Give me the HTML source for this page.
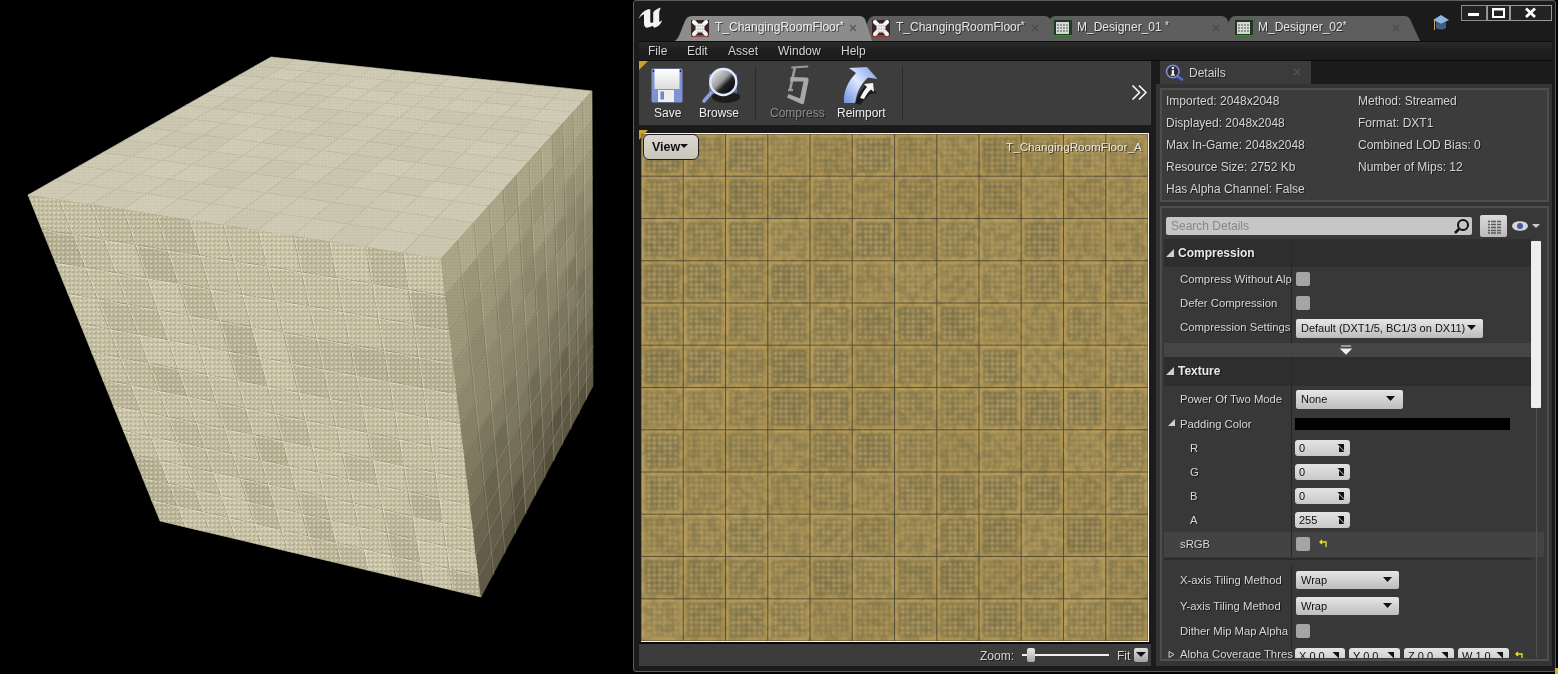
<!DOCTYPE html>
<html><head><meta charset="utf-8">
<style>
*{margin:0;padding:0;box-sizing:border-box}
html,body{width:1558px;height:674px;overflow:hidden;background:#000}
body{position:relative;font-family:"Liberation Sans",sans-serif;font-size:12px;color:#d4d4d4}
.a{position:absolute}
.t{position:absolute;white-space:nowrap;line-height:1;will-change:transform;text-shadow:1px 1px 0 rgba(0,0,0,.55)}
.win{left:633px;top:0;width:923px;height:672px;background:#1b1b1b;border:1px solid #5c5c5c;border-radius:3px}
.menubar{left:639px;top:41px;width:913px;height:20px;background:linear-gradient(#2a2a2a,#1d1d1d 60%,#1d1d1d);border-top:1px solid #0c0c0c;border-bottom:1px solid #0c0c0c}
.toolbar{left:639px;top:61px;width:512px;height:64px;background:#3d3d3d;border-right:1px solid #464646}
.sep{top:66px;width:1px;height:54px;background:#2b2b2b}
.zoombar{left:639px;top:644px;width:512px;height:22px;background:#3c3c3c}
.tex{left:641px;top:134px;width:507px;height:507px;overflow:hidden}
.dtab{left:1160px;top:61px;width:151px;height:23px;background:#3b3b3b}
.panel{left:1156px;top:84px;width:396px;height:582px;background:#343434}
.box{border:2px solid #4e4e4e;background:#3c3c3c}
.hdr{background:#2e2e2e}
.row{background:#383838}
.cb{width:14px;height:14px;background:#a5a5a5;border-radius:2px}
.dd{height:19px;font-size:11px;background:linear-gradient(#e6e6e6,#bdbdbd);border-radius:2px;color:#111;text-shadow:none}
.fld{height:16px;background:linear-gradient(#e4e4e4,#c8c8c8);border-radius:3px;color:#111}
.lbl{color:#d6d6d6;font-size:11.3px}
</style></head><body>
<svg width="633" height="674" style="position:absolute;left:0;top:0"><defs><pattern id="cdots" width="4.4" height="4.4" patternUnits="userSpaceOnUse"><circle cx="2.6" cy="2.9" r="1.5" fill="#7a6c48" opacity=".42"/><circle cx="2" cy="2.1" r="1.15" fill="#fbf8ea" opacity=".55"/></pattern><pattern id="cdots2" width="3" height="3" patternUnits="userSpaceOnUse"><circle cx="1.5" cy="1.5" r="0.8" fill="#6e6a50" opacity=".18"/></pattern><linearGradient id="rg" x1="0" y1="0" x2="0" y2="1"><stop offset="0" stop-color="#000" stop-opacity="0"/><stop offset="1" stop-color="#000" stop-opacity=".12"/></linearGradient></defs><g stroke-width="0.6"><polygon points="28.0,195.0 58.9,199.8 84.7,184.6 54.4,180.0" fill="#d0cbb4" stroke="#d0cbb4"/><polygon points="58.9,199.8 90.4,204.7 115.5,189.2 84.7,184.6" fill="#d0cbb4" stroke="#d0cbb4"/><polygon points="90.4,204.7 122.5,209.6 146.9,193.8 115.5,189.2" fill="#cec9b2" stroke="#cec9b2"/><polygon points="122.5,209.6 155.2,214.7 178.9,198.6 146.9,193.8" fill="#d2cdb6" stroke="#d2cdb6"/><polygon points="155.2,214.7 188.5,219.9 211.5,203.5 178.9,198.6" fill="#d0cbb4" stroke="#d0cbb4"/><polygon points="188.5,219.9 222.5,225.1 244.7,208.4 211.5,203.5" fill="#d0cbb4" stroke="#d0cbb4"/><polygon points="222.5,225.1 257.1,230.5 278.5,213.5 244.7,208.4" fill="#ccc7b0" stroke="#ccc7b0"/><polygon points="257.1,230.5 292.4,236.0 313.0,218.6 278.5,213.5" fill="#d0cbb4" stroke="#d0cbb4"/><polygon points="292.4,236.0 328.5,241.6 348.2,223.9 313.0,218.6" fill="#d0cbb4" stroke="#d0cbb4"/><polygon points="328.5,241.6 365.2,247.3 384.0,229.2 348.2,223.9" fill="#ccc7b0" stroke="#ccc7b0"/><polygon points="365.2,247.3 402.7,253.1 420.6,234.7 384.0,229.2" fill="#d0cbb4" stroke="#d0cbb4"/><polygon points="402.7,253.1 441.0,259.0 457.8,240.3 420.6,234.7" fill="#ccc7b0" stroke="#ccc7b0"/><polygon points="54.4,180.0 84.7,184.6 109.0,170.1 79.3,165.9" fill="#d0cbb4" stroke="#d0cbb4"/><polygon points="84.7,184.6 115.5,189.2 139.2,174.5 109.0,170.1" fill="#d0cbb4" stroke="#d0cbb4"/><polygon points="115.5,189.2 146.9,193.8 170.0,178.9 139.2,174.5" fill="#d0cbb4" stroke="#d0cbb4"/><polygon points="146.9,193.8 178.9,198.6 201.3,183.4 170.0,178.9" fill="#cec9b2" stroke="#cec9b2"/><polygon points="178.9,198.6 211.5,203.5 233.2,188.0 201.3,183.4" fill="#cec9b2" stroke="#cec9b2"/><polygon points="211.5,203.5 244.7,208.4 265.6,192.7 233.2,188.0" fill="#d0cbb4" stroke="#d0cbb4"/><polygon points="244.7,208.4 278.5,213.5 298.7,197.5 265.6,192.7" fill="#d0cbb4" stroke="#d0cbb4"/><polygon points="278.5,213.5 313.0,218.6 332.4,202.3 298.7,197.5" fill="#d0cbb4" stroke="#d0cbb4"/><polygon points="313.0,218.6 348.2,223.9 366.7,207.3 332.4,202.3" fill="#ccc7b0" stroke="#ccc7b0"/><polygon points="348.2,223.9 384.0,229.2 401.7,212.3 366.7,207.3" fill="#cec9b2" stroke="#cec9b2"/><polygon points="384.0,229.2 420.6,234.7 437.3,217.4 401.7,212.3" fill="#d0cbb4" stroke="#d0cbb4"/><polygon points="420.6,234.7 457.8,240.3 473.7,222.7 437.3,217.4" fill="#ccc7b0" stroke="#ccc7b0"/><polygon points="79.3,165.9 109.0,170.1 132.1,156.5 103.0,152.4" fill="#d0cbb4" stroke="#d0cbb4"/><polygon points="109.0,170.1 139.2,174.5 161.7,160.6 132.1,156.5" fill="#d0cbb4" stroke="#d0cbb4"/><polygon points="139.2,174.5 170.0,178.9 191.8,164.8 161.7,160.6" fill="#d2cdb6" stroke="#d2cdb6"/><polygon points="170.0,178.9 201.3,183.4 222.5,169.1 191.8,164.8" fill="#d2cdb6" stroke="#d2cdb6"/><polygon points="201.3,183.4 233.2,188.0 253.7,173.4 222.5,169.1" fill="#ccc7b0" stroke="#ccc7b0"/><polygon points="233.2,188.0 265.6,192.7 285.5,177.8 253.7,173.4" fill="#d0cbb4" stroke="#d0cbb4"/><polygon points="265.6,192.7 298.7,197.5 317.8,182.3 285.5,177.8" fill="#ccc7b0" stroke="#ccc7b0"/><polygon points="298.7,197.5 332.4,202.3 350.7,186.9 317.8,182.3" fill="#ccc7b0" stroke="#ccc7b0"/><polygon points="332.4,202.3 366.7,207.3 384.2,191.5 350.7,186.9" fill="#cec9b2" stroke="#cec9b2"/><polygon points="366.7,207.3 401.7,212.3 418.4,196.3 384.2,191.5" fill="#d0cbb4" stroke="#d0cbb4"/><polygon points="401.7,212.3 437.3,217.4 453.1,201.1 418.4,196.3" fill="#d0cbb4" stroke="#d0cbb4"/><polygon points="437.3,217.4 473.7,222.7 488.6,206.1 453.1,201.1" fill="#d0cbb4" stroke="#d0cbb4"/><polygon points="103.0,152.4 132.1,156.5 154.0,143.5 125.4,139.7" fill="#ccc7b0" stroke="#ccc7b0"/><polygon points="132.1,156.5 161.7,160.6 183.0,147.4 154.0,143.5" fill="#d0cbb4" stroke="#d0cbb4"/><polygon points="161.7,160.6 191.8,164.8 212.6,151.4 183.0,147.4" fill="#d0cbb4" stroke="#d0cbb4"/><polygon points="191.8,164.8 222.5,169.1 242.6,155.4 212.6,151.4" fill="#cec9b2" stroke="#cec9b2"/><polygon points="222.5,169.1 253.7,173.4 273.1,159.5 242.6,155.4" fill="#d0cbb4" stroke="#d0cbb4"/><polygon points="253.7,173.4 285.5,177.8 304.2,163.7 273.1,159.5" fill="#ccc7b0" stroke="#ccc7b0"/><polygon points="285.5,177.8 317.8,182.3 335.8,168.0 304.2,163.7" fill="#d0cbb4" stroke="#d0cbb4"/><polygon points="317.8,182.3 350.7,186.9 368.0,172.3 335.8,168.0" fill="#ccc7b0" stroke="#ccc7b0"/><polygon points="350.7,186.9 384.2,191.5 400.8,176.7 368.0,172.3" fill="#d0cbb4" stroke="#d0cbb4"/><polygon points="384.2,191.5 418.4,196.3 434.1,181.2 400.8,176.7" fill="#ccc7b0" stroke="#ccc7b0"/><polygon points="418.4,196.3 453.1,201.1 468.1,185.8 434.1,181.2" fill="#d2cdb6" stroke="#d2cdb6"/><polygon points="453.1,201.1 488.6,206.1 502.7,190.4 468.1,185.8" fill="#d0cbb4" stroke="#d0cbb4"/><polygon points="125.4,139.7 154.0,143.5 174.8,131.2 146.8,127.6" fill="#d0cbb4" stroke="#d0cbb4"/><polygon points="154.0,143.5 183.0,147.4 203.3,134.9 174.8,131.2" fill="#ccc7b0" stroke="#ccc7b0"/><polygon points="183.0,147.4 212.6,151.4 232.2,138.7 203.3,134.9" fill="#ccc7b0" stroke="#ccc7b0"/><polygon points="212.6,151.4 242.6,155.4 261.7,142.5 232.2,138.7" fill="#d2cdb6" stroke="#d2cdb6"/><polygon points="242.6,155.4 273.1,159.5 291.6,146.4 261.7,142.5" fill="#d0cbb4" stroke="#d0cbb4"/><polygon points="273.1,159.5 304.2,163.7 322.0,150.4 291.6,146.4" fill="#d0cbb4" stroke="#d0cbb4"/><polygon points="304.2,163.7 335.8,168.0 353.0,154.4 322.0,150.4" fill="#d0cbb4" stroke="#d0cbb4"/><polygon points="335.8,168.0 368.0,172.3 384.4,158.5 353.0,154.4" fill="#ccc7b0" stroke="#ccc7b0"/><polygon points="368.0,172.3 400.8,176.7 416.5,162.6 384.4,158.5" fill="#d2cdb6" stroke="#d2cdb6"/><polygon points="400.8,176.7 434.1,181.2 449.1,166.9 416.5,162.6" fill="#d0cbb4" stroke="#d0cbb4"/><polygon points="434.1,181.2 468.1,185.8 482.2,171.2 449.1,166.9" fill="#ccc7b0" stroke="#ccc7b0"/><polygon points="468.1,185.8 502.7,190.4 516.0,175.6 482.2,171.2" fill="#d0cbb4" stroke="#d0cbb4"/><polygon points="146.8,127.6 174.8,131.2 194.6,119.5 167.1,116.0" fill="#ccc7b0" stroke="#ccc7b0"/><polygon points="174.8,131.2 203.3,134.9 222.5,123.0 194.6,119.5" fill="#d0cbb4" stroke="#d0cbb4"/><polygon points="203.3,134.9 232.2,138.7 250.9,126.6 222.5,123.0" fill="#cec9b2" stroke="#cec9b2"/><polygon points="232.2,138.7 261.7,142.5 279.8,130.2 250.9,126.6" fill="#d2cdb6" stroke="#d2cdb6"/><polygon points="261.7,142.5 291.6,146.4 309.1,133.9 279.8,130.2" fill="#ccc7b0" stroke="#ccc7b0"/><polygon points="291.6,146.4 322.0,150.4 338.9,137.7 309.1,133.9" fill="#cec9b2" stroke="#cec9b2"/><polygon points="322.0,150.4 353.0,154.4 369.2,141.5 338.9,137.7" fill="#d0cbb4" stroke="#d0cbb4"/><polygon points="353.0,154.4 384.4,158.5 400.0,145.4 369.2,141.5" fill="#cec9b2" stroke="#cec9b2"/><polygon points="384.4,158.5 416.5,162.6 431.3,149.3 400.0,145.4" fill="#ccc7b0" stroke="#ccc7b0"/><polygon points="416.5,162.6 449.1,166.9 463.2,153.3 431.3,149.3" fill="#cec9b2" stroke="#cec9b2"/><polygon points="449.1,166.9 482.2,171.2 495.6,157.4 463.2,153.3" fill="#d0cbb4" stroke="#d0cbb4"/><polygon points="482.2,171.2 516.0,175.6 528.6,161.6 495.6,157.4" fill="#d0cbb4" stroke="#d0cbb4"/><polygon points="167.1,116.0 194.6,119.5 213.4,108.3 186.4,105.0" fill="#d0cbb4" stroke="#d0cbb4"/><polygon points="194.6,119.5 222.5,123.0 240.9,111.7 213.4,108.3" fill="#d0cbb4" stroke="#d0cbb4"/><polygon points="222.5,123.0 250.9,126.6 268.7,115.1 240.9,111.7" fill="#d2cdb6" stroke="#d2cdb6"/><polygon points="250.9,126.6 279.8,130.2 297.0,118.5 268.7,115.1" fill="#d0cbb4" stroke="#d0cbb4"/><polygon points="279.8,130.2 309.1,133.9 325.7,122.0 297.0,118.5" fill="#d0cbb4" stroke="#d0cbb4"/><polygon points="309.1,133.9 338.9,137.7 354.9,125.6 325.7,122.0" fill="#ccc7b0" stroke="#ccc7b0"/><polygon points="338.9,137.7 369.2,141.5 384.6,129.2 354.9,125.6" fill="#d0cbb4" stroke="#d0cbb4"/><polygon points="369.2,141.5 400.0,145.4 414.8,132.9 384.6,129.2" fill="#ccc7b0" stroke="#ccc7b0"/><polygon points="400.0,145.4 431.3,149.3 445.4,136.7 414.8,132.9" fill="#cec9b2" stroke="#cec9b2"/><polygon points="431.3,149.3 463.2,153.3 476.6,140.5 445.4,136.7" fill="#d0cbb4" stroke="#d0cbb4"/><polygon points="463.2,153.3 495.6,157.4 508.3,144.4 476.6,140.5" fill="#d2cdb6" stroke="#d2cdb6"/><polygon points="495.6,157.4 528.6,161.6 540.5,148.3 508.3,144.4" fill="#cec9b2" stroke="#cec9b2"/><polygon points="186.4,105.0 213.4,108.3 231.4,97.7 204.9,94.5" fill="#d0cbb4" stroke="#d0cbb4"/><polygon points="213.4,108.3 240.9,111.7 258.3,100.9 231.4,97.7" fill="#ccc7b0" stroke="#ccc7b0"/><polygon points="240.9,111.7 268.7,115.1 285.7,104.1 258.3,100.9" fill="#d0cbb4" stroke="#d0cbb4"/><polygon points="268.7,115.1 297.0,118.5 313.4,107.4 285.7,104.1" fill="#d0cbb4" stroke="#d0cbb4"/><polygon points="297.0,118.5 325.7,122.0 341.6,110.7 313.4,107.4" fill="#ccc7b0" stroke="#ccc7b0"/><polygon points="325.7,122.0 354.9,125.6 370.2,114.1 341.6,110.7" fill="#cec9b2" stroke="#cec9b2"/><polygon points="354.9,125.6 384.6,129.2 399.3,117.6 370.2,114.1" fill="#d0cbb4" stroke="#d0cbb4"/><polygon points="384.6,129.2 414.8,132.9 428.8,121.1 399.3,117.6" fill="#d0cbb4" stroke="#d0cbb4"/><polygon points="414.8,132.9 445.4,136.7 458.8,124.6 428.8,121.1" fill="#d0cbb4" stroke="#d0cbb4"/><polygon points="445.4,136.7 476.6,140.5 489.3,128.3 458.8,124.6" fill="#cec9b2" stroke="#cec9b2"/><polygon points="476.6,140.5 508.3,144.4 520.3,131.9 489.3,128.3" fill="#cec9b2" stroke="#cec9b2"/><polygon points="508.3,144.4 540.5,148.3 551.8,135.7 520.3,131.9" fill="#d0cbb4" stroke="#d0cbb4"/><polygon points="204.9,94.5 231.4,97.7 248.6,87.5 222.5,84.5" fill="#d2cdb6" stroke="#d2cdb6"/><polygon points="231.4,97.7 258.3,100.9 275.0,90.6 248.6,87.5" fill="#d0cbb4" stroke="#d0cbb4"/><polygon points="258.3,100.9 285.7,104.1 301.8,93.6 275.0,90.6" fill="#ccc7b0" stroke="#ccc7b0"/><polygon points="285.7,104.1 313.4,107.4 329.1,96.8 301.8,93.6" fill="#ccc7b0" stroke="#ccc7b0"/><polygon points="313.4,107.4 341.6,110.7 356.7,100.0 329.1,96.8" fill="#d0cbb4" stroke="#d0cbb4"/><polygon points="341.6,110.7 370.2,114.1 384.8,103.2 356.7,100.0" fill="#d0cbb4" stroke="#d0cbb4"/><polygon points="370.2,114.1 399.3,117.6 413.3,106.5 384.8,103.2" fill="#d2cdb6" stroke="#d2cdb6"/><polygon points="399.3,117.6 428.8,121.1 442.2,109.8 413.3,106.5" fill="#d0cbb4" stroke="#d0cbb4"/><polygon points="428.8,121.1 458.8,124.6 471.6,113.2 442.2,109.8" fill="#ccc7b0" stroke="#ccc7b0"/><polygon points="458.8,124.6 489.3,128.3 501.5,116.6 471.6,113.2" fill="#cec9b2" stroke="#cec9b2"/><polygon points="489.3,128.3 520.3,131.9 531.8,120.1 501.5,116.6" fill="#ccc7b0" stroke="#ccc7b0"/><polygon points="520.3,131.9 551.8,135.7 562.6,123.7 531.8,120.1" fill="#cec9b2" stroke="#cec9b2"/><polygon points="222.5,84.5 248.6,87.5 265.0,77.8 239.4,74.9" fill="#d0cbb4" stroke="#d0cbb4"/><polygon points="248.6,87.5 275.0,90.6 291.0,80.7 265.0,77.8" fill="#d0cbb4" stroke="#d0cbb4"/><polygon points="275.0,90.6 301.8,93.6 317.3,83.7 291.0,80.7" fill="#d0cbb4" stroke="#d0cbb4"/><polygon points="301.8,93.6 329.1,96.8 344.0,86.6 317.3,83.7" fill="#cec9b2" stroke="#cec9b2"/><polygon points="329.1,96.8 356.7,100.0 371.1,89.7 344.0,86.6" fill="#d2cdb6" stroke="#d2cdb6"/><polygon points="356.7,100.0 384.8,103.2 398.7,92.8 371.1,89.7" fill="#d2cdb6" stroke="#d2cdb6"/><polygon points="384.8,103.2 413.3,106.5 426.6,95.9 398.7,92.8" fill="#d0cbb4" stroke="#d0cbb4"/><polygon points="413.3,106.5 442.2,109.8 455.0,99.1 426.6,95.9" fill="#d0cbb4" stroke="#d0cbb4"/><polygon points="442.2,109.8 471.6,113.2 483.8,102.3 455.0,99.1" fill="#d2cdb6" stroke="#d2cdb6"/><polygon points="471.6,113.2 501.5,116.6 513.0,105.6 483.8,102.3" fill="#d2cdb6" stroke="#d2cdb6"/><polygon points="501.5,116.6 531.8,120.1 542.7,108.9 513.0,105.6" fill="#d0cbb4" stroke="#d0cbb4"/><polygon points="531.8,120.1 562.6,123.7 572.9,112.3 542.7,108.9" fill="#d2cdb6" stroke="#d2cdb6"/><polygon points="239.4,74.9 265.0,77.8 280.7,68.5 255.5,65.8" fill="#ccc7b0" stroke="#ccc7b0"/><polygon points="265.0,77.8 291.0,80.7 306.2,71.3 280.7,68.5" fill="#d2cdb6" stroke="#d2cdb6"/><polygon points="291.0,80.7 317.3,83.7 332.1,74.1 306.2,71.3" fill="#cec9b2" stroke="#cec9b2"/><polygon points="317.3,83.7 344.0,86.6 358.3,77.0 332.1,74.1" fill="#d0cbb4" stroke="#d0cbb4"/><polygon points="344.0,86.6 371.1,89.7 384.9,79.9 358.3,77.0" fill="#d2cdb6" stroke="#d2cdb6"/><polygon points="371.1,89.7 398.7,92.8 411.9,82.8 384.9,79.9" fill="#cec9b2" stroke="#cec9b2"/><polygon points="398.7,92.8 426.6,95.9 439.3,85.8 411.9,82.8" fill="#d2cdb6" stroke="#d2cdb6"/><polygon points="426.6,95.9 455.0,99.1 467.2,88.8 439.3,85.8" fill="#d0cbb4" stroke="#d0cbb4"/><polygon points="455.0,99.1 483.8,102.3 495.4,91.9 467.2,88.8" fill="#d0cbb4" stroke="#d0cbb4"/><polygon points="483.8,102.3 513.0,105.6 524.0,95.0 495.4,91.9" fill="#cec9b2" stroke="#cec9b2"/><polygon points="513.0,105.6 542.7,108.9 553.1,98.2 524.0,95.0" fill="#d0cbb4" stroke="#d0cbb4"/><polygon points="542.7,108.9 572.9,112.3 582.7,101.4 553.1,98.2" fill="#d0cbb4" stroke="#d0cbb4"/><polygon points="255.5,65.8 280.7,68.5 295.7,59.6 271.0,57.0" fill="#ccc7b0" stroke="#ccc7b0"/><polygon points="280.7,68.5 306.2,71.3 320.8,62.3 295.7,59.6" fill="#d0cbb4" stroke="#d0cbb4"/><polygon points="306.2,71.3 332.1,74.1 346.2,65.0 320.8,62.3" fill="#cec9b2" stroke="#cec9b2"/><polygon points="332.1,74.1 358.3,77.0 372.0,67.7 346.2,65.0" fill="#d0cbb4" stroke="#d0cbb4"/><polygon points="358.3,77.0 384.9,79.9 398.1,70.5 372.0,67.7" fill="#d0cbb4" stroke="#d0cbb4"/><polygon points="384.9,79.9 411.9,82.8 424.6,73.3 398.1,70.5" fill="#d0cbb4" stroke="#d0cbb4"/><polygon points="411.9,82.8 439.3,85.8 451.5,76.1 424.6,73.3" fill="#d0cbb4" stroke="#d0cbb4"/><polygon points="439.3,85.8 467.2,88.8 478.8,79.0 451.5,76.1" fill="#d2cdb6" stroke="#d2cdb6"/><polygon points="467.2,88.8 495.4,91.9 506.5,81.9 478.8,79.0" fill="#d0cbb4" stroke="#d0cbb4"/><polygon points="495.4,91.9 524.0,95.0 534.6,84.9 506.5,81.9" fill="#cec9b2" stroke="#cec9b2"/><polygon points="524.0,95.0 553.1,98.2 563.1,87.9 534.6,84.9" fill="#cec9b2" stroke="#cec9b2"/><polygon points="553.1,98.2 582.7,101.4 592.0,91.0 563.1,87.9" fill="#cec9b2" stroke="#cec9b2"/></g><g stroke="rgba(150,145,120,.07)" stroke-width="0.7"><line x1="58.9" y1="199.8" x2="295.7" y2="59.6"/><line x1="90.4" y1="204.7" x2="320.8" y2="62.3"/><line x1="122.5" y1="209.6" x2="346.2" y2="65.0"/><line x1="155.2" y1="214.7" x2="372.0" y2="67.7"/><line x1="188.5" y1="219.9" x2="398.1" y2="70.5"/><line x1="222.5" y1="225.1" x2="424.6" y2="73.3"/><line x1="257.1" y1="230.5" x2="451.5" y2="76.1"/><line x1="292.4" y1="236.0" x2="478.8" y2="79.0"/><line x1="328.5" y1="241.6" x2="506.5" y2="81.9"/><line x1="365.2" y1="247.3" x2="534.6" y2="84.9"/><line x1="402.7" y1="253.1" x2="563.1" y2="87.9"/><line x1="54.4" y1="180.0" x2="457.8" y2="240.3"/><line x1="79.3" y1="165.9" x2="473.7" y2="222.7"/><line x1="103.0" y1="152.4" x2="488.6" y2="206.1"/><line x1="125.4" y1="139.7" x2="502.7" y2="190.4"/><line x1="146.8" y1="127.6" x2="516.0" y2="175.6"/><line x1="167.1" y1="116.0" x2="528.6" y2="161.6"/><line x1="186.4" y1="105.0" x2="540.5" y2="148.3"/><line x1="204.9" y1="94.5" x2="551.8" y2="135.7"/><line x1="222.5" y1="84.5" x2="562.6" y2="123.7"/><line x1="239.4" y1="74.9" x2="572.9" y2="112.3"/><line x1="255.5" y1="65.8" x2="582.7" y2="101.4"/></g><g stroke-width="0.6"><polygon points="28.0,195.0 59.1,199.8 72.4,234.4 41.9,229.4" fill="#c7c2a5" stroke="#c7c2a5"/><polygon points="59.1,199.8 90.8,204.7 103.5,239.5 72.4,234.4" fill="#c7c2a5" stroke="#c7c2a5"/><polygon points="90.8,204.7 123.1,209.7 135.0,244.7 103.5,239.5" fill="#c2bda0" stroke="#c2bda0"/><polygon points="123.1,209.7 155.9,214.8 167.1,250.0 135.0,244.7" fill="#c2bda0" stroke="#c2bda0"/><polygon points="155.9,214.8 189.3,220.0 199.8,255.3 167.1,250.0" fill="#bdb89b" stroke="#bdb89b"/><polygon points="189.3,220.0 223.3,225.3 233.0,260.8 199.8,255.3" fill="#cac5a8" stroke="#cac5a8"/><polygon points="223.3,225.3 257.9,230.6 266.8,266.3 233.0,260.8" fill="#c7c2a5" stroke="#c7c2a5"/><polygon points="257.9,230.6 293.2,236.1 301.2,271.9 266.8,266.3" fill="#cdc8ab" stroke="#cdc8ab"/><polygon points="293.2,236.1 329.1,241.7 336.3,277.7 301.2,271.9" fill="#c2bda0" stroke="#c2bda0"/><polygon points="329.1,241.7 365.7,247.3 372.0,283.5 336.3,277.7" fill="#cdc8ab" stroke="#cdc8ab"/><polygon points="365.7,247.3 403.0,253.1 408.3,289.5 372.0,283.5" fill="#bdb89b" stroke="#bdb89b"/><polygon points="403.0,253.1 441.0,259.0 445.3,295.6 408.3,289.5" fill="#cac5a8" stroke="#cac5a8"/><polygon points="41.9,229.4 72.4,234.4 85.1,267.4 55.2,262.2" fill="#b7b295" stroke="#b7b295"/><polygon points="72.4,234.4 103.5,239.5 115.5,272.6 85.1,267.4" fill="#c2bda0" stroke="#c2bda0"/><polygon points="103.5,239.5 135.0,244.7 146.4,277.9 115.5,272.6" fill="#cac5a8" stroke="#cac5a8"/><polygon points="135.0,244.7 167.1,250.0 177.8,283.4 146.4,277.9" fill="#b7b295" stroke="#b7b295"/><polygon points="167.1,250.0 199.8,255.3 209.7,288.9 177.8,283.4" fill="#c2bda0" stroke="#c2bda0"/><polygon points="199.8,255.3 233.0,260.8 242.2,294.5 209.7,288.9" fill="#c7c2a5" stroke="#c7c2a5"/><polygon points="233.0,260.8 266.8,266.3 275.2,300.2 242.2,294.5" fill="#c7c2a5" stroke="#c7c2a5"/><polygon points="266.8,266.3 301.2,271.9 308.8,306.0 275.2,300.2" fill="#c7c2a5" stroke="#c7c2a5"/><polygon points="301.2,271.9 336.3,277.7 343.1,311.8 308.8,306.0" fill="#c7c2a5" stroke="#c7c2a5"/><polygon points="336.3,277.7 372.0,283.5 377.9,317.8 343.1,311.8" fill="#c7c2a5" stroke="#c7c2a5"/><polygon points="372.0,283.5 408.3,289.5 413.3,324.0 377.9,317.8" fill="#c7c2a5" stroke="#c7c2a5"/><polygon points="408.3,289.5 445.3,295.6 449.4,330.2 413.3,324.0" fill="#b7b295" stroke="#b7b295"/><polygon points="55.2,262.2 85.1,267.4 97.2,298.8 67.9,293.5" fill="#c7c2a5" stroke="#c7c2a5"/><polygon points="85.1,267.4 115.5,272.6 126.9,304.2 97.2,298.8" fill="#c7c2a5" stroke="#c7c2a5"/><polygon points="115.5,272.6 146.4,277.9 157.2,309.6 126.9,304.2" fill="#c2bda0" stroke="#c2bda0"/><polygon points="146.4,277.9 177.8,283.4 187.9,315.2 157.2,309.6" fill="#cdc8ab" stroke="#cdc8ab"/><polygon points="177.8,283.4 209.7,288.9 219.2,320.8 187.9,315.2" fill="#bdb89b" stroke="#bdb89b"/><polygon points="209.7,288.9 242.2,294.5 250.9,326.5 219.2,320.8" fill="#c7c2a5" stroke="#c7c2a5"/><polygon points="242.2,294.5 275.2,300.2 283.2,332.4 250.9,326.5" fill="#cac5a8" stroke="#cac5a8"/><polygon points="275.2,300.2 308.8,306.0 316.1,338.3 283.2,332.4" fill="#cac5a8" stroke="#cac5a8"/><polygon points="308.8,306.0 343.1,311.8 349.5,344.3 316.1,338.3" fill="#c7c2a5" stroke="#c7c2a5"/><polygon points="343.1,311.8 377.9,317.8 383.5,350.4 349.5,344.3" fill="#c7c2a5" stroke="#c7c2a5"/><polygon points="377.9,317.8 413.3,324.0 418.1,356.7 383.5,350.4" fill="#c2bda0" stroke="#c2bda0"/><polygon points="413.3,324.0 449.4,330.2 453.3,363.0 418.1,356.7" fill="#bdb89b" stroke="#bdb89b"/><polygon points="67.9,293.5 97.2,298.8 108.7,328.8 80.0,323.4" fill="#cac5a8" stroke="#cac5a8"/><polygon points="97.2,298.8 126.9,304.2 137.8,334.3 108.7,328.8" fill="#bdb89b" stroke="#bdb89b"/><polygon points="126.9,304.2 157.2,309.6 167.5,339.8 137.8,334.3" fill="#bdb89b" stroke="#bdb89b"/><polygon points="157.2,309.6 187.9,315.2 197.6,345.5 167.5,339.8" fill="#cac5a8" stroke="#cac5a8"/><polygon points="187.9,315.2 219.2,320.8 228.2,351.2 197.6,345.5" fill="#c7c2a5" stroke="#c7c2a5"/><polygon points="219.2,320.8 250.9,326.5 259.2,357.1 228.2,351.2" fill="#b7b295" stroke="#b7b295"/><polygon points="250.9,326.5 283.2,332.4 290.9,363.0 259.2,357.1" fill="#cdc8ab" stroke="#cdc8ab"/><polygon points="283.2,332.4 316.1,338.3 323.0,369.0 290.9,363.0" fill="#bdb89b" stroke="#bdb89b"/><polygon points="316.1,338.3 349.5,344.3 355.6,375.2 323.0,369.0" fill="#bdb89b" stroke="#bdb89b"/><polygon points="349.5,344.3 383.5,350.4 388.9,381.4 355.6,375.2" fill="#b7b295" stroke="#b7b295"/><polygon points="383.5,350.4 418.1,356.7 422.6,387.8 388.9,381.4" fill="#b7b295" stroke="#b7b295"/><polygon points="418.1,356.7 453.3,363.0 457.0,394.2 422.6,387.8" fill="#b7b295" stroke="#b7b295"/><polygon points="80.0,323.4 108.7,328.8 119.7,357.4 91.5,351.9" fill="#c7c2a5" stroke="#c7c2a5"/><polygon points="108.7,328.8 137.8,334.3 148.3,363.0 119.7,357.4" fill="#c2bda0" stroke="#c2bda0"/><polygon points="137.8,334.3 167.5,339.8 177.3,368.7 148.3,363.0" fill="#cdc8ab" stroke="#cdc8ab"/><polygon points="167.5,339.8 197.6,345.5 206.8,374.4 177.3,368.7" fill="#cdc8ab" stroke="#cdc8ab"/><polygon points="197.6,345.5 228.2,351.2 236.8,380.3 206.8,374.4" fill="#cdc8ab" stroke="#cdc8ab"/><polygon points="228.2,351.2 259.2,357.1 267.2,386.2 236.8,380.3" fill="#b7b295" stroke="#b7b295"/><polygon points="259.2,357.1 290.9,363.0 298.1,392.2 267.2,386.2" fill="#cdc8ab" stroke="#cdc8ab"/><polygon points="290.9,363.0 323.0,369.0 329.5,398.4 298.1,392.2" fill="#bdb89b" stroke="#bdb89b"/><polygon points="323.0,369.0 355.6,375.2 361.5,404.6 329.5,398.4" fill="#c2bda0" stroke="#c2bda0"/><polygon points="355.6,375.2 388.9,381.4 393.9,410.9 361.5,404.6" fill="#c2bda0" stroke="#c2bda0"/><polygon points="388.9,381.4 422.6,387.8 427.0,417.4 393.9,410.9" fill="#c2bda0" stroke="#c2bda0"/><polygon points="422.6,387.8 457.0,394.2 460.5,423.9 427.0,417.4" fill="#c2bda0" stroke="#c2bda0"/><polygon points="91.5,351.9 119.7,357.4 130.2,384.8 102.6,379.2" fill="#c7c2a5" stroke="#c7c2a5"/><polygon points="119.7,357.4 148.3,363.0 158.2,390.5 130.2,384.8" fill="#c2bda0" stroke="#c2bda0"/><polygon points="148.3,363.0 177.3,368.7 186.7,396.2 158.2,390.5" fill="#b7b295" stroke="#b7b295"/><polygon points="177.3,368.7 206.8,374.4 215.6,402.0 186.7,396.2" fill="#c2bda0" stroke="#c2bda0"/><polygon points="206.8,374.4 236.8,380.3 245.0,408.0 215.6,402.0" fill="#c7c2a5" stroke="#c7c2a5"/><polygon points="236.8,380.3 267.2,386.2 274.8,414.0 245.0,408.0" fill="#c7c2a5" stroke="#c7c2a5"/><polygon points="267.2,386.2 298.1,392.2 305.0,420.1 274.8,414.0" fill="#c7c2a5" stroke="#c7c2a5"/><polygon points="298.1,392.2 329.5,398.4 335.8,426.3 305.0,420.1" fill="#c7c2a5" stroke="#c7c2a5"/><polygon points="329.5,398.4 361.5,404.6 367.0,432.6 335.8,426.3" fill="#c2bda0" stroke="#c2bda0"/><polygon points="361.5,404.6 393.9,410.9 398.8,439.0 367.0,432.6" fill="#c7c2a5" stroke="#c7c2a5"/><polygon points="393.9,410.9 427.0,417.4 431.1,445.5 398.8,439.0" fill="#c7c2a5" stroke="#c7c2a5"/><polygon points="427.0,417.4 460.5,423.9 463.9,452.2 431.1,445.5" fill="#cac5a8" stroke="#cac5a8"/><polygon points="102.6,379.2 130.2,384.8 140.3,411.0 113.2,405.4" fill="#bdb89b" stroke="#bdb89b"/><polygon points="130.2,384.8 158.2,390.5 167.8,416.7 140.3,411.0" fill="#c7c2a5" stroke="#c7c2a5"/><polygon points="158.2,390.5 186.7,396.2 195.7,422.6 167.8,416.7" fill="#c7c2a5" stroke="#c7c2a5"/><polygon points="186.7,396.2 215.6,402.0 224.0,428.5 195.7,422.6" fill="#c7c2a5" stroke="#c7c2a5"/><polygon points="215.6,402.0 245.0,408.0 252.8,434.5 224.0,428.5" fill="#bdb89b" stroke="#bdb89b"/><polygon points="245.0,408.0 274.8,414.0 282.0,440.6 252.8,434.5" fill="#c7c2a5" stroke="#c7c2a5"/><polygon points="274.8,414.0 305.0,420.1 311.7,446.7 282.0,440.6" fill="#bdb89b" stroke="#bdb89b"/><polygon points="305.0,420.1 335.8,426.3 341.8,453.0 311.7,446.7" fill="#c7c2a5" stroke="#c7c2a5"/><polygon points="335.8,426.3 367.0,432.6 372.4,459.4 341.8,453.0" fill="#cac5a8" stroke="#cac5a8"/><polygon points="367.0,432.6 398.8,439.0 403.4,465.9 372.4,459.4" fill="#bdb89b" stroke="#bdb89b"/><polygon points="398.8,439.0 431.1,445.5 435.0,472.4 403.4,465.9" fill="#c7c2a5" stroke="#c7c2a5"/><polygon points="431.1,445.5 463.9,452.2 467.0,479.1 435.0,472.4" fill="#c7c2a5" stroke="#c7c2a5"/><polygon points="113.2,405.4 140.3,411.0 149.9,436.1 123.3,430.4" fill="#cdc8ab" stroke="#cdc8ab"/><polygon points="140.3,411.0 167.8,416.7 176.9,441.9 149.9,436.1" fill="#c7c2a5" stroke="#c7c2a5"/><polygon points="167.8,416.7 195.7,422.6 204.3,447.8 176.9,441.9" fill="#bdb89b" stroke="#bdb89b"/><polygon points="195.7,422.6 224.0,428.5 232.1,453.8 204.3,447.8" fill="#c2bda0" stroke="#c2bda0"/><polygon points="224.0,428.5 252.8,434.5 260.3,459.8 232.1,453.8" fill="#c7c2a5" stroke="#c7c2a5"/><polygon points="252.8,434.5 282.0,440.6 288.9,466.0 260.3,459.8" fill="#b7b295" stroke="#b7b295"/><polygon points="282.0,440.6 311.7,446.7 318.0,472.2 288.9,466.0" fill="#cac5a8" stroke="#cac5a8"/><polygon points="311.7,446.7 341.8,453.0 347.5,478.5 318.0,472.2" fill="#cac5a8" stroke="#cac5a8"/><polygon points="341.8,453.0 372.4,459.4 377.4,485.0 347.5,478.5" fill="#bdb89b" stroke="#bdb89b"/><polygon points="372.4,459.4 403.4,465.9 407.9,491.5 377.4,485.0" fill="#cac5a8" stroke="#cac5a8"/><polygon points="403.4,465.9 435.0,472.4 438.7,498.1 407.9,491.5" fill="#c2bda0" stroke="#c2bda0"/><polygon points="435.0,472.4 467.0,479.1 470.1,504.8 438.7,498.1" fill="#c7c2a5" stroke="#c7c2a5"/><polygon points="123.3,430.4 149.9,436.1 159.2,460.2 133.1,454.4" fill="#c7c2a5" stroke="#c7c2a5"/><polygon points="149.9,436.1 176.9,441.9 185.7,466.1 159.2,460.2" fill="#cdc8ab" stroke="#cdc8ab"/><polygon points="176.9,441.9 204.3,447.8 212.6,472.0 185.7,466.1" fill="#c2bda0" stroke="#c2bda0"/><polygon points="204.3,447.8 232.1,453.8 239.8,478.0 212.6,472.0" fill="#c2bda0" stroke="#c2bda0"/><polygon points="232.1,453.8 260.3,459.8 267.5,484.1 239.8,478.0" fill="#c2bda0" stroke="#c2bda0"/><polygon points="260.3,459.8 288.9,466.0 295.6,490.3 267.5,484.1" fill="#c2bda0" stroke="#c2bda0"/><polygon points="288.9,466.0 318.0,472.2 324.1,496.6 295.6,490.3" fill="#cac5a8" stroke="#cac5a8"/><polygon points="318.0,472.2 347.5,478.5 353.0,502.9 324.1,496.6" fill="#c7c2a5" stroke="#c7c2a5"/><polygon points="347.5,478.5 377.4,485.0 382.3,509.4 353.0,502.9" fill="#c7c2a5" stroke="#c7c2a5"/><polygon points="377.4,485.0 407.9,491.5 412.1,516.0 382.3,509.4" fill="#c7c2a5" stroke="#c7c2a5"/><polygon points="407.9,491.5 438.7,498.1 442.3,522.6 412.1,516.0" fill="#b7b295" stroke="#b7b295"/><polygon points="438.7,498.1 470.1,504.8 473.0,529.4 442.3,522.6" fill="#cac5a8" stroke="#cac5a8"/><polygon points="133.1,454.4 159.2,460.2 168.1,483.3 142.4,477.5" fill="#b7b295" stroke="#b7b295"/><polygon points="159.2,460.2 185.7,466.1 194.1,489.2 168.1,483.3" fill="#cac5a8" stroke="#cac5a8"/><polygon points="185.7,466.1 212.6,472.0 220.5,495.2 194.1,489.2" fill="#c2bda0" stroke="#c2bda0"/><polygon points="212.6,472.0 239.8,478.0 247.3,501.2 220.5,495.2" fill="#cdc8ab" stroke="#cdc8ab"/><polygon points="239.8,478.0 267.5,484.1 274.4,507.4 247.3,501.2" fill="#b7b295" stroke="#b7b295"/><polygon points="267.5,484.1 295.6,490.3 301.9,513.6 274.4,507.4" fill="#c7c2a5" stroke="#c7c2a5"/><polygon points="295.6,490.3 324.1,496.6 329.9,519.9 301.9,513.6" fill="#bdb89b" stroke="#bdb89b"/><polygon points="324.1,496.6 353.0,502.9 358.2,526.3 329.9,519.9" fill="#c7c2a5" stroke="#c7c2a5"/><polygon points="353.0,502.9 382.3,509.4 387.0,532.8 358.2,526.3" fill="#c7c2a5" stroke="#c7c2a5"/><polygon points="382.3,509.4 412.1,516.0 416.1,539.4 387.0,532.8" fill="#bdb89b" stroke="#bdb89b"/><polygon points="412.1,516.0 442.3,522.6 445.7,546.1 416.1,539.4" fill="#cac5a8" stroke="#cac5a8"/><polygon points="442.3,522.6 473.0,529.4 475.8,552.9 445.7,546.1" fill="#c7c2a5" stroke="#c7c2a5"/><polygon points="142.4,477.5 168.1,483.3 176.6,505.5 151.4,499.7" fill="#b7b295" stroke="#b7b295"/><polygon points="168.1,483.3 194.1,489.2 202.2,511.4 176.6,505.5" fill="#bdb89b" stroke="#bdb89b"/><polygon points="194.1,489.2 220.5,495.2 228.1,517.5 202.2,511.4" fill="#c7c2a5" stroke="#c7c2a5"/><polygon points="220.5,495.2 247.3,501.2 254.4,523.5 228.1,517.5" fill="#cdc8ab" stroke="#cdc8ab"/><polygon points="247.3,501.2 274.4,507.4 281.0,529.7 254.4,523.5" fill="#bdb89b" stroke="#bdb89b"/><polygon points="274.4,507.4 301.9,513.6 308.0,536.0 281.0,529.7" fill="#cac5a8" stroke="#cac5a8"/><polygon points="301.9,513.6 329.9,519.9 335.4,542.3 308.0,536.0" fill="#b7b295" stroke="#b7b295"/><polygon points="329.9,519.9 358.2,526.3 363.2,548.7 335.4,542.3" fill="#cdc8ab" stroke="#cdc8ab"/><polygon points="358.2,526.3 387.0,532.8 391.4,555.3 363.2,548.7" fill="#c7c2a5" stroke="#c7c2a5"/><polygon points="387.0,532.8 416.1,539.4 420.0,561.9 391.4,555.3" fill="#b7b295" stroke="#b7b295"/><polygon points="416.1,539.4 445.7,546.1 449.0,568.6 420.0,561.9" fill="#cdc8ab" stroke="#cdc8ab"/><polygon points="445.7,546.1 475.8,552.9 478.4,575.4 449.0,568.6" fill="#cac5a8" stroke="#cac5a8"/><polygon points="151.4,499.7 176.6,505.5 184.8,526.9 160.0,521.0" fill="#bdb89b" stroke="#bdb89b"/><polygon points="176.6,505.5 202.2,511.4 209.9,532.8 184.8,526.9" fill="#cac5a8" stroke="#cac5a8"/><polygon points="202.2,511.4 228.1,517.5 235.4,538.8 209.9,532.8" fill="#c7c2a5" stroke="#c7c2a5"/><polygon points="228.1,517.5 254.4,523.5 261.2,545.0 235.4,538.8" fill="#cac5a8" stroke="#cac5a8"/><polygon points="254.4,523.5 281.0,529.7 287.4,551.2 261.2,545.0" fill="#cdc8ab" stroke="#cdc8ab"/><polygon points="281.0,529.7 308.0,536.0 313.9,557.4 287.4,551.2" fill="#c7c2a5" stroke="#c7c2a5"/><polygon points="308.0,536.0 335.4,542.3 340.8,563.8 313.9,557.4" fill="#bdb89b" stroke="#bdb89b"/><polygon points="335.4,542.3 363.2,548.7 368.0,570.3 340.8,563.8" fill="#bdb89b" stroke="#bdb89b"/><polygon points="363.2,548.7 391.4,555.3 395.7,576.8 368.0,570.3" fill="#cdc8ab" stroke="#cdc8ab"/><polygon points="391.4,555.3 420.0,561.9 423.7,583.4 395.7,576.8" fill="#bdb89b" stroke="#bdb89b"/><polygon points="420.0,561.9 449.0,568.6 452.2,590.2 423.7,583.4" fill="#cac5a8" stroke="#cac5a8"/><polygon points="449.0,568.6 478.4,575.4 481.0,597.0 452.2,590.2" fill="#b7b295" stroke="#b7b295"/></g><g stroke="rgba(120,115,90,.45)" stroke-width="0.7"><line x1="59.1" y1="199.8" x2="184.8" y2="526.9"/><line x1="90.8" y1="204.7" x2="209.9" y2="532.8"/><line x1="123.1" y1="209.7" x2="235.4" y2="538.8"/><line x1="155.9" y1="214.8" x2="261.2" y2="545.0"/><line x1="189.3" y1="220.0" x2="287.4" y2="551.2"/><line x1="223.3" y1="225.3" x2="313.9" y2="557.4"/><line x1="257.9" y1="230.6" x2="340.8" y2="563.8"/><line x1="293.2" y1="236.1" x2="368.0" y2="570.3"/><line x1="329.1" y1="241.7" x2="395.7" y2="576.8"/><line x1="365.7" y1="247.3" x2="423.7" y2="583.4"/><line x1="403.0" y1="253.1" x2="452.2" y2="590.2"/><line x1="41.9" y1="229.4" x2="445.3" y2="295.6"/><line x1="55.2" y1="262.2" x2="449.4" y2="330.2"/><line x1="67.9" y1="293.5" x2="453.3" y2="363.0"/><line x1="80.0" y1="323.4" x2="457.0" y2="394.2"/><line x1="91.5" y1="351.9" x2="460.5" y2="423.9"/><line x1="102.6" y1="379.2" x2="463.9" y2="452.2"/><line x1="113.2" y1="405.4" x2="467.0" y2="479.1"/><line x1="123.3" y1="430.4" x2="470.1" y2="504.8"/><line x1="133.1" y1="454.4" x2="473.0" y2="529.4"/><line x1="142.4" y1="477.5" x2="475.8" y2="552.9"/><line x1="151.4" y1="499.7" x2="478.4" y2="575.4"/></g><g stroke="rgba(240,236,220,.7)" stroke-width="0.9"><line x1="60.1" y1="199.8" x2="185.8" y2="526.9"/><line x1="91.8" y1="204.7" x2="210.9" y2="532.8"/><line x1="124.1" y1="209.7" x2="236.4" y2="538.8"/><line x1="156.9" y1="214.8" x2="262.2" y2="545.0"/><line x1="190.3" y1="220.0" x2="288.4" y2="551.2"/><line x1="224.3" y1="225.3" x2="314.9" y2="557.4"/><line x1="258.9" y1="230.6" x2="341.8" y2="563.8"/><line x1="294.2" y1="236.1" x2="369.0" y2="570.3"/><line x1="330.1" y1="241.7" x2="396.7" y2="576.8"/><line x1="366.7" y1="247.3" x2="424.7" y2="583.4"/><line x1="404.0" y1="253.1" x2="453.2" y2="590.2"/><line x1="41.9" y1="230.4" x2="445.3" y2="296.6"/><line x1="55.2" y1="263.2" x2="449.4" y2="331.2"/><line x1="67.9" y1="294.5" x2="453.3" y2="364.0"/><line x1="80.0" y1="324.4" x2="457.0" y2="395.2"/><line x1="91.5" y1="352.9" x2="460.5" y2="424.9"/><line x1="102.6" y1="380.2" x2="463.9" y2="453.2"/><line x1="113.2" y1="406.4" x2="467.0" y2="480.1"/><line x1="123.3" y1="431.4" x2="470.1" y2="505.8"/><line x1="133.1" y1="455.4" x2="473.0" y2="530.4"/><line x1="142.4" y1="478.5" x2="475.8" y2="553.9"/><line x1="151.4" y1="500.7" x2="478.4" y2="576.4"/></g><g stroke-width="0.6"><polygon points="441.0,259.0 458.0,240.1 461.7,276.3 445.4,295.8" fill="#aca788" stroke="#aca788"/><polygon points="458.0,240.1 473.9,222.4 477.1,258.0 461.7,276.3" fill="#b0ab8c" stroke="#b0ab8c"/><polygon points="473.9,222.4 488.9,205.7 491.6,240.7 477.1,258.0" fill="#aca788" stroke="#aca788"/><polygon points="488.9,205.7 503.0,190.0 505.3,224.4 491.6,240.7" fill="#aca788" stroke="#aca788"/><polygon points="503.0,190.0 516.3,175.2 518.2,209.0 505.3,224.4" fill="#a49f80" stroke="#a49f80"/><polygon points="516.3,175.2 528.9,161.2 530.5,194.4 518.2,209.0" fill="#aca788" stroke="#aca788"/><polygon points="528.9,161.2 540.8,148.0 542.1,180.6 530.5,194.4" fill="#aca788" stroke="#aca788"/><polygon points="540.8,148.0 552.1,135.4 553.1,167.5 542.1,180.6" fill="#b0ab8c" stroke="#b0ab8c"/><polygon points="552.1,135.4 562.8,123.5 563.6,155.0 553.1,167.5" fill="#a49f80" stroke="#a49f80"/><polygon points="562.8,123.5 573.0,112.1 573.5,143.2 563.6,155.0" fill="#a8a384" stroke="#a8a384"/><polygon points="573.0,112.1 582.7,101.3 583.0,131.8 573.5,143.2" fill="#aca788" stroke="#aca788"/><polygon points="582.7,101.3 592.0,91.0 592.1,121.0 583.0,131.8" fill="#aca788" stroke="#aca788"/><polygon points="445.4,295.8 461.7,276.3 465.3,310.6 449.5,330.6" fill="#a09b7d" stroke="#a09b7d"/><polygon points="461.7,276.3 477.1,258.0 480.2,291.7 465.3,310.6" fill="#9c9779" stroke="#9c9779"/><polygon points="477.1,258.0 491.6,240.7 494.2,273.9 480.2,291.7" fill="#a09b7d" stroke="#a09b7d"/><polygon points="491.6,240.7 505.3,224.4 507.5,257.1 494.2,273.9" fill="#a49f81" stroke="#a49f81"/><polygon points="505.3,224.4 518.2,209.0 520.1,241.2 507.5,257.1" fill="#a8a385" stroke="#a8a385"/><polygon points="518.2,209.0 530.5,194.4 532.0,226.1 520.1,241.2" fill="#a09b7d" stroke="#a09b7d"/><polygon points="530.5,194.4 542.1,180.6 543.3,211.8 532.0,226.1" fill="#9c9779" stroke="#9c9779"/><polygon points="542.1,180.6 553.1,167.5 554.1,198.2 543.3,211.8" fill="#a09b7d" stroke="#a09b7d"/><polygon points="553.1,167.5 563.6,155.0 564.3,185.3 554.1,198.2" fill="#a09b7d" stroke="#a09b7d"/><polygon points="563.6,155.0 573.5,143.2 574.0,172.9 564.3,185.3" fill="#a49f81" stroke="#a49f81"/><polygon points="573.5,143.2 583.0,131.8 583.3,161.1 574.0,172.9" fill="#a49f81" stroke="#a49f81"/><polygon points="583.0,131.8 592.1,121.0 592.2,149.9 583.3,161.1" fill="#a49f81" stroke="#a49f81"/><polygon points="449.5,330.6 465.3,310.6 468.7,343.1 453.4,363.6" fill="#9d987b" stroke="#9d987b"/><polygon points="465.3,310.6 480.2,291.7 483.1,323.8 468.7,343.1" fill="#959073" stroke="#959073"/><polygon points="480.2,291.7 494.2,273.9 496.7,305.6 483.1,323.8" fill="#9d987b" stroke="#9d987b"/><polygon points="494.2,273.9 507.5,257.1 509.6,288.3 496.7,305.6" fill="#999477" stroke="#999477"/><polygon points="507.5,257.1 520.1,241.2 521.9,271.9 509.6,288.3" fill="#9d987b" stroke="#9d987b"/><polygon points="520.1,241.2 532.0,226.1 533.5,256.4 521.9,271.9" fill="#959073" stroke="#959073"/><polygon points="532.0,226.1 543.3,211.8 544.5,241.6 533.5,256.4" fill="#a19c7f" stroke="#a19c7f"/><polygon points="543.3,211.8 554.1,198.2 555.0,227.6 544.5,241.6" fill="#a19c7f" stroke="#a19c7f"/><polygon points="554.1,198.2 564.3,185.3 565.0,214.2 555.0,227.6" fill="#9d987b" stroke="#9d987b"/><polygon points="564.3,185.3 574.0,172.9 574.5,201.5 565.0,214.2" fill="#959073" stroke="#959073"/><polygon points="574.0,172.9 583.3,161.1 583.6,189.3 574.5,201.5" fill="#999477" stroke="#999477"/><polygon points="583.3,161.1 592.2,149.9 592.3,177.6 583.6,189.3" fill="#9d987b" stroke="#9d987b"/><polygon points="453.4,363.6 468.7,343.1 471.9,374.0 457.1,394.9" fill="#969075" stroke="#969075"/><polygon points="468.7,343.1 483.1,323.8 485.9,354.3 471.9,374.0" fill="#8e886d" stroke="#8e886d"/><polygon points="483.1,323.8 496.7,305.6 499.1,335.7 485.9,354.3" fill="#969075" stroke="#969075"/><polygon points="496.7,305.6 509.6,288.3 511.7,318.0 499.1,335.7" fill="#8e886d" stroke="#8e886d"/><polygon points="509.6,288.3 521.9,271.9 523.6,301.3 511.7,318.0" fill="#969075" stroke="#969075"/><polygon points="521.9,271.9 533.5,256.4 534.9,285.4 523.6,301.3" fill="#8e886d" stroke="#8e886d"/><polygon points="533.5,256.4 544.5,241.6 545.6,270.2 534.9,285.4" fill="#928c71" stroke="#928c71"/><polygon points="544.5,241.6 555.0,227.6 555.9,255.8 545.6,270.2" fill="#969075" stroke="#969075"/><polygon points="555.0,227.6 565.0,214.2 565.6,242.0 555.9,255.8" fill="#8e886d" stroke="#8e886d"/><polygon points="565.0,214.2 574.5,201.5 574.9,228.9 565.6,242.0" fill="#8e886d" stroke="#8e886d"/><polygon points="574.5,201.5 583.6,189.3 583.9,216.3 574.9,228.9" fill="#8e886d" stroke="#8e886d"/><polygon points="583.6,189.3 592.3,177.6 592.4,204.3 583.9,216.3" fill="#969075" stroke="#969075"/><polygon points="457.1,394.9 471.9,374.0 474.9,403.4 460.6,424.6" fill="#8e896e" stroke="#8e896e"/><polygon points="471.9,374.0 485.9,354.3 488.5,383.4 474.9,403.4" fill="#8e896e" stroke="#8e896e"/><polygon points="485.9,354.3 499.1,335.7 501.4,364.4 488.5,383.4" fill="#8e896e" stroke="#8e896e"/><polygon points="499.1,335.7 511.7,318.0 513.6,346.4 501.4,364.4" fill="#8e896e" stroke="#8e896e"/><polygon points="511.7,318.0 523.6,301.3 525.2,329.3 513.6,346.4" fill="#8e896e" stroke="#8e896e"/><polygon points="523.6,301.3 534.9,285.4 536.2,313.1 525.2,329.3" fill="#928d72" stroke="#928d72"/><polygon points="534.9,285.4 545.6,270.2 546.7,297.6 536.2,313.1" fill="#868166" stroke="#868166"/><polygon points="545.6,270.2 555.9,255.8 556.7,282.8 546.7,297.6" fill="#8e896e" stroke="#8e896e"/><polygon points="555.9,255.8 565.6,242.0 566.2,268.7 556.7,282.8" fill="#928d72" stroke="#928d72"/><polygon points="565.6,242.0 574.9,228.9 575.4,255.2 566.2,268.7" fill="#928d72" stroke="#928d72"/><polygon points="574.9,228.9 583.9,216.3 584.1,242.3 575.4,255.2" fill="#868166" stroke="#868166"/><polygon points="583.9,216.3 592.4,204.3 592.5,230.0 584.1,242.3" fill="#8a856a" stroke="#8a856a"/><polygon points="460.6,424.6 474.9,403.4 477.9,431.4 463.9,452.8" fill="#878168" stroke="#878168"/><polygon points="474.9,403.4 488.5,383.4 491.0,411.1 477.9,431.4" fill="#8b856c" stroke="#8b856c"/><polygon points="488.5,383.4 501.4,364.4 503.5,391.9 491.0,411.1" fill="#8b856c" stroke="#8b856c"/><polygon points="501.4,364.4 513.6,346.4 515.4,373.6 503.5,391.9" fill="#878168" stroke="#878168"/><polygon points="513.6,346.4 525.2,329.3 526.7,356.2 515.4,373.6" fill="#878168" stroke="#878168"/><polygon points="525.2,329.3 536.2,313.1 537.5,339.6 526.7,356.2" fill="#878168" stroke="#878168"/><polygon points="536.2,313.1 546.7,297.6 547.7,323.8 537.5,339.6" fill="#878168" stroke="#878168"/><polygon points="546.7,297.6 556.7,282.8 557.5,308.7 547.7,323.8" fill="#8b856c" stroke="#8b856c"/><polygon points="556.7,282.8 566.2,268.7 566.9,294.3 557.5,308.7" fill="#878168" stroke="#878168"/><polygon points="566.2,268.7 575.4,255.2 575.8,280.6 566.9,294.3" fill="#7f7960" stroke="#7f7960"/><polygon points="575.4,255.2 584.1,242.3 584.4,267.4 575.8,280.6" fill="#878168" stroke="#878168"/><polygon points="584.1,242.3 592.5,230.0 592.6,254.7 584.4,267.4" fill="#878168" stroke="#878168"/><polygon points="463.9,452.8 477.9,431.4 480.6,458.1 467.1,479.7" fill="#807a62" stroke="#807a62"/><polygon points="477.9,431.4 491.0,411.1 493.4,437.6 480.6,458.1" fill="#7c765e" stroke="#7c765e"/><polygon points="491.0,411.1 503.5,391.9 505.6,418.1 493.4,437.6" fill="#807a62" stroke="#807a62"/><polygon points="503.5,391.9 515.4,373.6 517.2,399.5 505.6,418.1" fill="#7c765e" stroke="#7c765e"/><polygon points="515.4,373.6 526.7,356.2 528.2,381.9 517.2,399.5" fill="#847e66" stroke="#847e66"/><polygon points="526.7,356.2 537.5,339.6 538.7,365.1 528.2,381.9" fill="#807a62" stroke="#807a62"/><polygon points="537.5,339.6 547.7,323.8 548.7,349.0 538.7,365.1" fill="#847e66" stroke="#847e66"/><polygon points="547.7,323.8 557.5,308.7 558.3,333.7 548.7,349.0" fill="#7c765e" stroke="#7c765e"/><polygon points="557.5,308.7 566.9,294.3 567.4,319.0 558.3,333.7" fill="#7c765e" stroke="#7c765e"/><polygon points="566.9,294.3 575.8,280.6 576.2,304.9 567.4,319.0" fill="#847e66" stroke="#847e66"/><polygon points="575.8,280.6 584.4,267.4 584.6,291.5 576.2,304.9" fill="#78725a" stroke="#78725a"/><polygon points="584.4,267.4 592.6,254.7 592.6,278.6 584.6,291.5" fill="#807a62" stroke="#807a62"/><polygon points="467.1,479.7 480.6,458.1 483.3,483.6 470.2,505.4" fill="#78735b" stroke="#78735b"/><polygon points="480.6,458.1 493.4,437.6 495.7,462.8 483.3,483.6" fill="#746f57" stroke="#746f57"/><polygon points="493.4,437.6 505.6,418.1 507.6,443.2 495.7,462.8" fill="#706b53" stroke="#706b53"/><polygon points="505.6,418.1 517.2,399.5 518.9,424.4 507.6,443.2" fill="#7c775f" stroke="#7c775f"/><polygon points="517.2,399.5 528.2,381.9 529.6,406.5 518.9,424.4" fill="#7c775f" stroke="#7c775f"/><polygon points="528.2,381.9 538.7,365.1 539.9,389.5 529.6,406.5" fill="#706b53" stroke="#706b53"/><polygon points="538.7,365.1 548.7,349.0 549.7,373.2 539.9,389.5" fill="#7c775f" stroke="#7c775f"/><polygon points="548.7,349.0 558.3,333.7 559.0,357.6 549.7,373.2" fill="#78735b" stroke="#78735b"/><polygon points="558.3,333.7 567.4,319.0 568.0,342.7 559.0,357.6" fill="#7c775f" stroke="#7c775f"/><polygon points="567.4,319.0 576.2,304.9 576.6,328.4 568.0,342.7" fill="#78735b" stroke="#78735b"/><polygon points="576.2,304.9 584.6,291.5 584.8,314.7 576.6,328.4" fill="#7c775f" stroke="#7c775f"/><polygon points="584.6,291.5 592.6,278.6 592.7,301.6 584.8,314.7" fill="#7c775f" stroke="#7c775f"/><polygon points="470.2,505.4 483.3,483.6 485.8,507.9 473.1,529.9" fill="#716b55" stroke="#716b55"/><polygon points="483.3,483.6 495.7,462.8 497.9,487.0 485.8,507.9" fill="#69634d" stroke="#69634d"/><polygon points="495.7,462.8 507.6,443.2 509.5,467.2 497.9,487.0" fill="#716b55" stroke="#716b55"/><polygon points="507.6,443.2 518.9,424.4 520.5,448.2 509.5,467.2" fill="#756f59" stroke="#756f59"/><polygon points="518.9,424.4 529.6,406.5 531.0,430.2 520.5,448.2" fill="#716b55" stroke="#716b55"/><polygon points="529.6,406.5 539.9,389.5 541.0,412.9 531.0,430.2" fill="#716b55" stroke="#716b55"/><polygon points="539.9,389.5 549.7,373.2 550.6,396.4 541.0,412.9" fill="#716b55" stroke="#716b55"/><polygon points="549.7,373.2 559.0,357.6 559.7,380.7 550.6,396.4" fill="#716b55" stroke="#716b55"/><polygon points="559.0,357.6 568.0,342.7 568.5,365.6 559.7,380.7" fill="#69634d" stroke="#69634d"/><polygon points="568.0,342.7 576.6,328.4 576.9,351.1 568.5,365.6" fill="#756f59" stroke="#756f59"/><polygon points="576.6,328.4 584.8,314.7 585.0,337.2 576.9,351.1" fill="#716b55" stroke="#716b55"/><polygon points="584.8,314.7 592.7,301.6 592.8,323.8 585.0,337.2" fill="#756f59" stroke="#756f59"/><polygon points="473.1,529.9 485.8,507.9 488.2,531.2 475.8,553.2" fill="#6a644f" stroke="#6a644f"/><polygon points="485.8,507.9 497.9,487.0 500.0,510.2 488.2,531.2" fill="#66604b" stroke="#66604b"/><polygon points="497.9,487.0 509.5,467.2 511.3,490.2 500.0,510.2" fill="#6e6853" stroke="#6e6853"/><polygon points="509.5,467.2 520.5,448.2 522.0,471.1 511.3,490.2" fill="#6e6853" stroke="#6e6853"/><polygon points="520.5,448.2 531.0,430.2 532.3,452.9 522.0,471.1" fill="#6e6853" stroke="#6e6853"/><polygon points="531.0,430.2 541.0,412.9 542.1,435.5 532.3,452.9" fill="#625c47" stroke="#625c47"/><polygon points="541.0,412.9 550.6,396.4 551.5,418.8 542.1,435.5" fill="#6a644f" stroke="#6a644f"/><polygon points="550.6,396.4 559.7,380.7 560.4,402.9 551.5,418.8" fill="#6e6853" stroke="#6e6853"/><polygon points="559.7,380.7 568.5,365.6 569.0,387.6 560.4,402.9" fill="#6a644f" stroke="#6a644f"/><polygon points="568.5,365.6 576.9,351.1 577.3,372.9 569.0,387.6" fill="#6a644f" stroke="#6a644f"/><polygon points="576.9,351.1 585.0,337.2 585.2,358.8 577.3,372.9" fill="#6a644f" stroke="#6a644f"/><polygon points="585.0,337.2 592.8,323.8 592.9,345.2 585.2,358.8" fill="#66604b" stroke="#66604b"/><polygon points="475.8,553.2 488.2,531.2 490.5,553.5 478.5,575.6" fill="#625c48" stroke="#625c48"/><polygon points="488.2,531.2 500.0,510.2 502.1,532.4 490.5,553.5" fill="#625c48" stroke="#625c48"/><polygon points="500.0,510.2 511.3,490.2 513.0,512.3 502.1,532.4" fill="#66604c" stroke="#66604c"/><polygon points="511.3,490.2 522.0,471.1 523.5,493.1 513.0,512.3" fill="#5a5440" stroke="#5a5440"/><polygon points="522.0,471.1 532.3,452.9 533.5,474.7 523.5,493.1" fill="#66604c" stroke="#66604c"/><polygon points="532.3,452.9 542.1,435.5 543.1,457.2 533.5,474.7" fill="#625c48" stroke="#625c48"/><polygon points="542.1,435.5 551.5,418.8 552.3,440.4 543.1,457.2" fill="#625c48" stroke="#625c48"/><polygon points="551.5,418.8 560.4,402.9 561.1,424.3 552.3,440.4" fill="#5a5440" stroke="#5a5440"/><polygon points="560.4,402.9 569.0,387.6 569.5,408.8 561.1,424.3" fill="#5e5844" stroke="#5e5844"/><polygon points="569.0,387.6 577.3,372.9 577.7,393.9 569.5,408.8" fill="#66604c" stroke="#66604c"/><polygon points="577.3,372.9 585.2,358.8 585.4,379.7 577.7,393.9" fill="#66604c" stroke="#66604c"/><polygon points="585.2,358.8 592.9,345.2 592.9,366.0 585.4,379.7" fill="#66604c" stroke="#66604c"/><polygon points="478.5,575.6 490.5,553.5 492.8,574.8 481.0,597.0" fill="#5f5946" stroke="#5f5946"/><polygon points="490.5,553.5 502.1,532.4 504.0,553.7 492.8,574.8" fill="#5b5542" stroke="#5b5542"/><polygon points="502.1,532.4 513.0,512.3 514.7,533.5 504.0,553.7" fill="#57513e" stroke="#57513e"/><polygon points="513.0,512.3 523.5,493.1 525.0,514.2 514.7,533.5" fill="#534d3a" stroke="#534d3a"/><polygon points="523.5,493.1 533.5,474.7 534.7,495.7 525.0,514.2" fill="#5f5946" stroke="#5f5946"/><polygon points="533.5,474.7 543.1,457.2 544.1,478.1 534.7,495.7" fill="#5f5946" stroke="#5f5946"/><polygon points="543.1,457.2 552.3,440.4 553.1,461.1 544.1,478.1" fill="#534d3a" stroke="#534d3a"/><polygon points="552.3,440.4 561.1,424.3 561.7,444.9 553.1,461.1" fill="#5f5946" stroke="#5f5946"/><polygon points="561.1,424.3 569.5,408.8 570.0,429.3 561.7,444.9" fill="#5b5542" stroke="#5b5542"/><polygon points="569.5,408.8 577.7,393.9 578.0,414.3 570.0,429.3" fill="#5f5946" stroke="#5f5946"/><polygon points="577.7,393.9 585.4,379.7 585.6,399.9 578.0,414.3" fill="#57513e" stroke="#57513e"/><polygon points="585.4,379.7 592.9,366.0 593.0,386.0 585.6,399.9" fill="#5f5946" stroke="#5f5946"/></g><g stroke="rgba(90,85,65,.22)" stroke-width="0.7"><line x1="458.0" y1="240.1" x2="492.8" y2="574.8"/><line x1="473.9" y1="222.4" x2="504.0" y2="553.7"/><line x1="488.9" y1="205.7" x2="514.7" y2="533.5"/><line x1="503.0" y1="190.0" x2="525.0" y2="514.2"/><line x1="516.3" y1="175.2" x2="534.7" y2="495.7"/><line x1="528.9" y1="161.2" x2="544.1" y2="478.1"/><line x1="540.8" y1="148.0" x2="553.1" y2="461.1"/><line x1="552.1" y1="135.4" x2="561.7" y2="444.9"/><line x1="562.8" y1="123.5" x2="570.0" y2="429.3"/><line x1="573.0" y1="112.1" x2="578.0" y2="414.3"/><line x1="582.7" y1="101.3" x2="585.6" y2="399.9"/><line x1="445.4" y1="295.8" x2="592.1" y2="121.0"/><line x1="449.5" y1="330.6" x2="592.2" y2="149.9"/><line x1="453.4" y1="363.6" x2="592.3" y2="177.6"/><line x1="457.1" y1="394.9" x2="592.4" y2="204.3"/><line x1="460.6" y1="424.6" x2="592.5" y2="230.0"/><line x1="463.9" y1="452.8" x2="592.6" y2="254.7"/><line x1="467.1" y1="479.7" x2="592.6" y2="278.6"/><line x1="470.2" y1="505.4" x2="592.7" y2="301.6"/><line x1="473.1" y1="529.9" x2="592.8" y2="323.8"/><line x1="475.8" y1="553.2" x2="592.9" y2="345.2"/><line x1="478.5" y1="575.6" x2="592.9" y2="366.0"/></g><g stroke="rgba(215,210,185,.3)" stroke-width="0.9"><line x1="459.0" y1="240.1" x2="493.8" y2="574.8"/><line x1="474.9" y1="222.4" x2="505.0" y2="553.7"/><line x1="489.9" y1="205.7" x2="515.7" y2="533.5"/><line x1="504.0" y1="190.0" x2="526.0" y2="514.2"/><line x1="517.3" y1="175.2" x2="535.7" y2="495.7"/><line x1="529.9" y1="161.2" x2="545.1" y2="478.1"/><line x1="541.8" y1="148.0" x2="554.1" y2="461.1"/><line x1="553.1" y1="135.4" x2="562.7" y2="444.9"/><line x1="563.8" y1="123.5" x2="571.0" y2="429.3"/><line x1="574.0" y1="112.1" x2="579.0" y2="414.3"/><line x1="583.7" y1="101.3" x2="586.6" y2="399.9"/><line x1="445.4" y1="296.8" x2="592.1" y2="122.0"/><line x1="449.5" y1="331.6" x2="592.2" y2="150.9"/><line x1="453.4" y1="364.6" x2="592.3" y2="178.6"/><line x1="457.1" y1="395.9" x2="592.4" y2="205.3"/><line x1="460.6" y1="425.6" x2="592.5" y2="231.0"/><line x1="463.9" y1="453.8" x2="592.6" y2="255.7"/><line x1="467.1" y1="480.7" x2="592.6" y2="279.6"/><line x1="470.2" y1="506.4" x2="592.7" y2="302.6"/><line x1="473.1" y1="530.9" x2="592.8" y2="324.8"/><line x1="475.8" y1="554.2" x2="592.9" y2="346.2"/><line x1="478.5" y1="576.6" x2="592.9" y2="367.0"/></g><polygon points="28,195 441,259 481,597 160,521" fill="url(#cdots)" /><polygon points="441,259 592,91 593,386 481,597" fill="url(#cdots2)" /><polygon points="28,195 271,57 592,91 441,259" fill="url(#cdots2)" opacity=".6"/></svg>
<div class="a win"></div>
<!-- title area svg -->
<svg class="a" style="left:633px;top:0" width="923" height="42">
  <!-- UE logo -->
  <path d="M5.5,18.8 C7.5,14 10.5,11 15,9.3 L17.3,9.3 L17.3,21.5 C17.3,22.8 18.3,23.2 20.2,22.2 L20.2,12.5 C21.2,10.2 24,8.6 28,7.4 C26.6,9.6 26.2,11.5 26.2,14 L26.2,21.8 C27.2,21.8 28,21.2 29,20.3 C28.2,24 25.2,27 21.2,27.8 C20.4,27.2 20,26.6 19.9,25.8 C17.6,27 15,27.8 12.8,27.6 C11.6,26.6 11,25.2 11,23.5 L11,14.2 C9,15 7,16.8 5.5,18.8 Z" fill="#f4f4f4"/>
  <!-- tabs (relative x = abs-633) -->
  <path d="M407,41 L417,19 Q419,16 422,16 L589,16 Q592,16 594,19 L604,41 Z" fill="#5e5e5e"/>
  <path d="M587,41 L597,19 Q599,16 602,16 L772,16 Q775,16 777,19 L787,41 Z" fill="#5e5e5e"/>
  <path d="M226,41 L236,19 Q238,16 241,16 L412,16 Q415,16 417,19 L427,41 Z" fill="#5e5e5e"/>
  <path d="M41,41 C47,41 50,20 55,17 Q57,16 60,16 L227,16 Q230,16 232,19 L239,41 Z" fill="#8c8c8c"/>
  <!-- icons -->
  <rect x="58" y="20" width="18" height="16.5" fill="#3a2222"/><rect x="58" y="35" width="18" height="1.5" fill="#d82828"/><path d="M61,22 L73,34 M73,22 L61,34" stroke="#f0f0f0" stroke-width="4" stroke-linecap="round"/><path d="M67,23 L72,28 L67,33 L62,28 Z" fill="#f0f0f0"/><path d="M62,26 L72,26 M62,29 L72,29 M64,32 L70,32" stroke="#8a8a8a" stroke-width="1" stroke-dasharray="1.1 1.3"/><circle cx="61" cy="22" r="1.8" fill="#fff"/><circle cx="73" cy="22" r="1.8" fill="#fff"/>
  <rect x="239" y="20" width="18" height="16.5" fill="#3a2222"/><rect x="239" y="35" width="18" height="1.5" fill="#d82828"/><path d="M242,22 L254,34 M254,22 L242,34" stroke="#f0f0f0" stroke-width="4" stroke-linecap="round"/><path d="M248,23 L253,28 L248,33 L243,28 Z" fill="#f0f0f0"/><path d="M243,26 L253,26 M243,29 L253,29 M245,32 L251,32" stroke="#8a8a8a" stroke-width="1" stroke-dasharray="1.1 1.3"/><circle cx="242" cy="22" r="1.8" fill="#fff"/><circle cx="254" cy="22" r="1.8" fill="#fff"/>
  <rect x="421" y="20" width="18" height="16.5" fill="#1c3a1c"/><rect x="421" y="35" width="18" height="1.5" fill="#20a020"/><rect x="423" y="22" width="13" height="12" fill="#d8d8d8"/><path d="M424,25 H436 M424,28 H436 M424,31 H436" stroke="#555" stroke-width="1" stroke-dasharray="2 1"/>
  <rect x="602" y="20" width="18" height="16.5" fill="#1c3a1c"/><rect x="602" y="35" width="18" height="1.5" fill="#20a020"/><rect x="604" y="22" width="13" height="12" fill="#d8d8d8"/><path d="M605,25 H617 M605,28 H617 M605,31 H617" stroke="#555" stroke-width="1" stroke-dasharray="2 1"/>
  <!-- close x on tabs -->
  <path d="M217,25 L223,31 M223,25 L217,31" stroke="#555" stroke-width="1.2"/>
  <path d="M399,25 L405,31 M405,25 L399,31" stroke="#4a4a4a" stroke-width="1.2"/>
  <path d="M580,25 L586,31 M586,25 L580,31" stroke="#4a4a4a" stroke-width="1.2"/>
  <path d="M760,25 L766,31 M766,25 L760,31" stroke="#4a4a4a" stroke-width="1.2"/>
  <!-- grad cap -->
  <path d="M800,20 L808,15 L816,20 L808,24 Z" fill="#8fb4e0"/>
  <path d="M803,22 L803,28 Q808,31 813,28 L813,22 L808,24 Z" fill="#3d5f8c"/>
  <rect x="801" y="21" width="1" height="9" fill="#d9a44a"/>
  <!-- window buttons -->
  <rect x="828.5" y="5.5" width="25" height="15" fill="#232323" stroke="#8c8c8c"/>
  <rect x="854.5" y="5.5" width="22" height="15" fill="#232323" stroke="#9a9a9a"/>
  <rect x="877.5" y="5.5" width="41" height="15" fill="#232323" stroke="#9a9a9a"/>
  <rect x="835" y="13" width="11" height="3" fill="#fff"/>
  <rect x="860" y="9" width="11" height="8" fill="none" stroke="#fff" stroke-width="2"/><rect x="859" y="8" width="13" height="2.5" fill="#fff"/>
  <path d="M893,8.5 L902,17 M902,8.5 L893,17" stroke="#fff" stroke-width="2.8"/>
</svg>
<div class="t" style="left:715px;top:21px;font-size:12px;color:#f0f0f0">T_ChangingRoomFloor<span style="font-size:10px;vertical-align:2px">*</span></div>
<div class="t" style="left:896px;top:21px;font-size:12px;color:#e6e6e6">T_ChangingRoomFloor<span style="font-size:10px;vertical-align:2px">*</span></div>
<div class="t" style="left:1077px;top:21px;font-size:12px;color:#e6e6e6">M_Designer_01 <span style="font-size:10px;vertical-align:2px">*</span></div>
<div class="t" style="left:1258px;top:21px;font-size:12px;color:#e6e6e6">M_Designer_02<span style="font-size:10px;vertical-align:2px">*</span></div>

<div class="a menubar"></div>
<div class="t" style="left:648px;top:45px;font-size:12px">File</div>
<div class="t" style="left:687px;top:45px;font-size:12px">Edit</div>
<div class="t" style="left:728px;top:45px;font-size:12px">Asset</div>
<div class="t" style="left:778px;top:45px;font-size:12px">Window</div>
<div class="t" style="left:841px;top:45px;font-size:12px">Help</div>

<div class="a toolbar"></div>
<svg class="a" style="left:639px;top:61px" width="10" height="10"><path d="M0,0 L9,0 L0,9 Z" fill="#c9a227"/></svg>
<div class="a sep" style="left:755px"></div>
<div class="a sep" style="left:902px"></div>
<!-- save icon -->
<svg class="a" style="left:650px;top:67px" width="36" height="38">
  <defs><linearGradient id="sv" x1="0" y1="0" x2="0" y2="1"><stop offset="0" stop-color="#ffffff"/><stop offset="1" stop-color="#dcdcdc"/></linearGradient>
  <linearGradient id="gl" x1="0" y1="0" x2="1" y2="1"><stop offset="0" stop-color="#ffffff"/><stop offset=".45" stop-color="#9a9a9a"/><stop offset=".6" stop-color="#202020"/><stop offset="1" stop-color="#000"/></linearGradient></defs>
  <rect x="1.5" y="1.5" width="31" height="34" rx="1.5" fill="#7c94d6"/>
  <rect x="4.5" y="2" width="25" height="20" fill="url(#sv)"/>
  <rect x="8" y="23" width="16" height="12" fill="#eeeeee"/>
  <rect x="10.5" y="24.5" width="3.5" height="8" fill="#6a86cc"/>
  <circle cx="3.5" cy="4" r=".9" fill="#223"/><circle cx="30.5" cy="4" r=".9" fill="#223"/>
</svg>
<!-- browse icon -->
<svg class="a" style="left:699px;top:66px" width="44" height="40">
  <rect x="10" y="8" width="28" height="20" fill="#6f84c8" opacity=".7"/>
  <ellipse cx="27" cy="31" rx="14" ry="6" fill="#000" opacity=".55"/>
  <line x1="12" y1="27" x2="5" y2="35" stroke="#8aa0e0" stroke-width="3.6" stroke-linecap="round"/>
  <circle cx="24.3" cy="16" r="13" fill="url(#gl)" stroke="#dfe8ff" stroke-width="2.4"/>
</svg>
<!-- compress icon -->
<svg class="a" style="left:780px;top:62px" width="34" height="46">
  <path d="M12,5.5 L27.5,4.5" stroke="#9a9a9a" stroke-width="1.8" stroke-linecap="round"/>
  <path d="M15,5 L10,28" stroke="#9a9a9a" stroke-width="2.6"/>
  <path d="M10.5,15 L27,15.5 Q29,16 28.6,18.5 L24,41 Q23.5,42.5 21.5,42 L7,35.5 L8.5,32 L20,36.5 L23.5,19.5 L10,19.5 Z" fill="#a8a8a8"/>
  <path d="M8,28 L13,28" stroke="#9a9a9a" stroke-width="2.4"/>
</svg>
<!-- reimport icon -->
<svg class="a" style="left:840px;top:62px" width="42" height="44">
  <defs><linearGradient id="ri" x1="0" y1="1" x2="1" y2="0"><stop offset="0" stop-color="#6e8fe0"/><stop offset=".5" stop-color="#dfe8ff"/><stop offset="1" stop-color="#7a98e8"/></linearGradient></defs>
  <path d="M4,41 C3,30 8,19 16,11 L9,6 L27,5 L37.5,17 L28,15.5 C21,22 16,31 15.5,41 Z" fill="url(#ri)"/>
  <path d="M15,41 C18,33 22,27 27,22 L37,31 L30,32 C26,36 22,40 20,43 Z" fill="#111" opacity=".8"/>
  <path d="M20,36 C22,32 24,28 27,25 L24,22 L33,21 L34,30 L31,27.5 C28,30 26,33 24,37 Z" fill="#f6f6f6"/>
</svg>
<div class="t" style="left:654px;top:107px;font-size:12px;color:#f0f0f0">Save</div>
<div class="t" style="left:699px;top:107px;font-size:12px;color:#f0f0f0">Browse</div>
<div class="t" style="left:770px;top:107px;font-size:12px;color:#8c8c8c">Compress</div>
<div class="t" style="left:837px;top:107px;font-size:12px;color:#f0f0f0">Reimport</div>
<svg class="a" style="left:1131px;top:84px" width="18" height="18"><path d="M1.5,1.5 L8.5,8.5 L1.5,15.5 M8,1.5 L15,8.5 L8,15.5" fill="none" stroke="#fff" stroke-width="1.5"/></svg>

<!-- viewport -->
<div class="a" style="left:641px;top:133px;width:508px;height:509px;background:#f4f2ea"></div>
<div class="a" style="left:639px;top:642px;width:511px;height:2px;background:#0a0a0a"></div>
<svg class="a" style="left:639px;top:130px" width="10" height="11"><path d="M0,0 L9,0 L0,10 Z" fill="#c9a227"/></svg>
<div class="a tex"><svg width="507" height="507" style="position:absolute;left:0;top:0"><defs><pattern id="lat" width="5.2812" height="5.2812" patternUnits="userSpaceOnUse" x="-0.8" y="-0.8"><path d="M0,0.8H6 M0.8,0V6" stroke="#57533a" stroke-width="1.9"/><circle cx="3.44" cy="3.44" r="1.3" fill="#cdb985"/></pattern><filter id="tblur"><feGaussianBlur stdDeviation="1.0"/></filter><filter id="tnoise" x="0" y="0" width="1" height="1" color-interpolation-filters="sRGB"><feTurbulence type="fractalNoise" baseFrequency="0.12" numOctaves="2" seed="4"/><feColorMatrix values="0 0 0 0 0.40  0 0 0 0 0.40  0 0 0 0 0.28  4 0 0 0 -1.7"/></filter></defs><rect x="0.0" y="0.0" width="42.8" height="42.8" fill="#b09656"/><rect x="0.0" y="42.2" width="42.8" height="42.8" fill="#b09656"/><rect x="0.0" y="84.5" width="42.8" height="42.8" fill="#b39959"/><rect x="0.0" y="126.8" width="42.8" height="42.8" fill="#b09656"/><rect x="0.0" y="169.0" width="42.8" height="42.8" fill="#b09656"/><rect x="0.0" y="211.2" width="42.8" height="42.8" fill="#ad9353"/><rect x="0.0" y="253.5" width="42.8" height="42.8" fill="#b09656"/><rect x="0.0" y="295.8" width="42.8" height="42.8" fill="#b39959"/><rect x="0.0" y="338.0" width="42.8" height="42.8" fill="#b39959"/><rect x="0.0" y="380.2" width="42.8" height="42.8" fill="#b09656"/><rect x="0.0" y="422.5" width="42.8" height="42.8" fill="#b09656"/><rect x="0.0" y="464.8" width="42.8" height="42.8" fill="#b39959"/><rect x="42.2" y="0.0" width="42.8" height="42.8" fill="#b09656"/><rect x="42.2" y="42.2" width="42.8" height="42.8" fill="#b09656"/><rect x="42.2" y="84.5" width="42.8" height="42.8" fill="#b09656"/><rect x="42.2" y="126.8" width="42.8" height="42.8" fill="#b39959"/><rect x="42.2" y="169.0" width="42.8" height="42.8" fill="#b39959"/><rect x="42.2" y="211.2" width="42.8" height="42.8" fill="#b39959"/><rect x="42.2" y="253.5" width="42.8" height="42.8" fill="#b39959"/><rect x="42.2" y="295.8" width="42.8" height="42.8" fill="#ad9353"/><rect x="42.2" y="338.0" width="42.8" height="42.8" fill="#b09656"/><rect x="42.2" y="380.2" width="42.8" height="42.8" fill="#b39959"/><rect x="42.2" y="422.5" width="42.8" height="42.8" fill="#ad9353"/><rect x="42.2" y="464.8" width="42.8" height="42.8" fill="#ad9353"/><rect x="84.5" y="0.0" width="42.8" height="42.8" fill="#b39959"/><rect x="84.5" y="42.2" width="42.8" height="42.8" fill="#ad9353"/><rect x="84.5" y="84.5" width="42.8" height="42.8" fill="#b39959"/><rect x="84.5" y="126.8" width="42.8" height="42.8" fill="#b09656"/><rect x="84.5" y="169.0" width="42.8" height="42.8" fill="#b09656"/><rect x="84.5" y="211.2" width="42.8" height="42.8" fill="#b09656"/><rect x="84.5" y="253.5" width="42.8" height="42.8" fill="#b09656"/><rect x="84.5" y="295.8" width="42.8" height="42.8" fill="#ad9353"/><rect x="84.5" y="338.0" width="42.8" height="42.8" fill="#b09656"/><rect x="84.5" y="380.2" width="42.8" height="42.8" fill="#b39959"/><rect x="84.5" y="422.5" width="42.8" height="42.8" fill="#b09656"/><rect x="84.5" y="464.8" width="42.8" height="42.8" fill="#b09656"/><rect x="126.8" y="0.0" width="42.8" height="42.8" fill="#b09656"/><rect x="126.8" y="42.2" width="42.8" height="42.8" fill="#ad9353"/><rect x="126.8" y="84.5" width="42.8" height="42.8" fill="#b39959"/><rect x="126.8" y="126.8" width="42.8" height="42.8" fill="#b09656"/><rect x="126.8" y="169.0" width="42.8" height="42.8" fill="#b09656"/><rect x="126.8" y="211.2" width="42.8" height="42.8" fill="#ad9353"/><rect x="126.8" y="253.5" width="42.8" height="42.8" fill="#ad9353"/><rect x="126.8" y="295.8" width="42.8" height="42.8" fill="#b09656"/><rect x="126.8" y="338.0" width="42.8" height="42.8" fill="#ad9353"/><rect x="126.8" y="380.2" width="42.8" height="42.8" fill="#b09656"/><rect x="126.8" y="422.5" width="42.8" height="42.8" fill="#b09656"/><rect x="126.8" y="464.8" width="42.8" height="42.8" fill="#b39959"/><rect x="169.0" y="0.0" width="42.8" height="42.8" fill="#ad9353"/><rect x="169.0" y="42.2" width="42.8" height="42.8" fill="#b09656"/><rect x="169.0" y="84.5" width="42.8" height="42.8" fill="#ad9353"/><rect x="169.0" y="126.8" width="42.8" height="42.8" fill="#b09656"/><rect x="169.0" y="169.0" width="42.8" height="42.8" fill="#b39959"/><rect x="169.0" y="211.2" width="42.8" height="42.8" fill="#b39959"/><rect x="169.0" y="253.5" width="42.8" height="42.8" fill="#b09656"/><rect x="169.0" y="295.8" width="42.8" height="42.8" fill="#ad9353"/><rect x="169.0" y="338.0" width="42.8" height="42.8" fill="#b09656"/><rect x="169.0" y="380.2" width="42.8" height="42.8" fill="#b39959"/><rect x="169.0" y="422.5" width="42.8" height="42.8" fill="#ad9353"/><rect x="169.0" y="464.8" width="42.8" height="42.8" fill="#ad9353"/><rect x="211.2" y="0.0" width="42.8" height="42.8" fill="#b39959"/><rect x="211.2" y="42.2" width="42.8" height="42.8" fill="#ad9353"/><rect x="211.2" y="84.5" width="42.8" height="42.8" fill="#b39959"/><rect x="211.2" y="126.8" width="42.8" height="42.8" fill="#b09656"/><rect x="211.2" y="169.0" width="42.8" height="42.8" fill="#ad9353"/><rect x="211.2" y="211.2" width="42.8" height="42.8" fill="#ad9353"/><rect x="211.2" y="253.5" width="42.8" height="42.8" fill="#ad9353"/><rect x="211.2" y="295.8" width="42.8" height="42.8" fill="#b09656"/><rect x="211.2" y="338.0" width="42.8" height="42.8" fill="#b09656"/><rect x="211.2" y="380.2" width="42.8" height="42.8" fill="#ad9353"/><rect x="211.2" y="422.5" width="42.8" height="42.8" fill="#b39959"/><rect x="211.2" y="464.8" width="42.8" height="42.8" fill="#ad9353"/><rect x="253.5" y="0.0" width="42.8" height="42.8" fill="#ad9353"/><rect x="253.5" y="42.2" width="42.8" height="42.8" fill="#ad9353"/><rect x="253.5" y="84.5" width="42.8" height="42.8" fill="#ad9353"/><rect x="253.5" y="126.8" width="42.8" height="42.8" fill="#b39959"/><rect x="253.5" y="169.0" width="42.8" height="42.8" fill="#b09656"/><rect x="253.5" y="211.2" width="42.8" height="42.8" fill="#b09656"/><rect x="253.5" y="253.5" width="42.8" height="42.8" fill="#b09656"/><rect x="253.5" y="295.8" width="42.8" height="42.8" fill="#b09656"/><rect x="253.5" y="338.0" width="42.8" height="42.8" fill="#b09656"/><rect x="253.5" y="380.2" width="42.8" height="42.8" fill="#b09656"/><rect x="253.5" y="422.5" width="42.8" height="42.8" fill="#ad9353"/><rect x="253.5" y="464.8" width="42.8" height="42.8" fill="#b09656"/><rect x="295.8" y="0.0" width="42.8" height="42.8" fill="#b09656"/><rect x="295.8" y="42.2" width="42.8" height="42.8" fill="#ad9353"/><rect x="295.8" y="84.5" width="42.8" height="42.8" fill="#b39959"/><rect x="295.8" y="126.8" width="42.8" height="42.8" fill="#b09656"/><rect x="295.8" y="169.0" width="42.8" height="42.8" fill="#b09656"/><rect x="295.8" y="211.2" width="42.8" height="42.8" fill="#b09656"/><rect x="295.8" y="253.5" width="42.8" height="42.8" fill="#b09656"/><rect x="295.8" y="295.8" width="42.8" height="42.8" fill="#ad9353"/><rect x="295.8" y="338.0" width="42.8" height="42.8" fill="#ad9353"/><rect x="295.8" y="380.2" width="42.8" height="42.8" fill="#b09656"/><rect x="295.8" y="422.5" width="42.8" height="42.8" fill="#ad9353"/><rect x="295.8" y="464.8" width="42.8" height="42.8" fill="#ad9353"/><rect x="338.0" y="0.0" width="42.8" height="42.8" fill="#ad9353"/><rect x="338.0" y="42.2" width="42.8" height="42.8" fill="#ad9353"/><rect x="338.0" y="84.5" width="42.8" height="42.8" fill="#b39959"/><rect x="338.0" y="126.8" width="42.8" height="42.8" fill="#b39959"/><rect x="338.0" y="169.0" width="42.8" height="42.8" fill="#b09656"/><rect x="338.0" y="211.2" width="42.8" height="42.8" fill="#b39959"/><rect x="338.0" y="253.5" width="42.8" height="42.8" fill="#b39959"/><rect x="338.0" y="295.8" width="42.8" height="42.8" fill="#b09656"/><rect x="338.0" y="338.0" width="42.8" height="42.8" fill="#b39959"/><rect x="338.0" y="380.2" width="42.8" height="42.8" fill="#ad9353"/><rect x="338.0" y="422.5" width="42.8" height="42.8" fill="#ad9353"/><rect x="338.0" y="464.8" width="42.8" height="42.8" fill="#b09656"/><rect x="380.2" y="0.0" width="42.8" height="42.8" fill="#ad9353"/><rect x="380.2" y="42.2" width="42.8" height="42.8" fill="#b09656"/><rect x="380.2" y="84.5" width="42.8" height="42.8" fill="#b09656"/><rect x="380.2" y="126.8" width="42.8" height="42.8" fill="#b09656"/><rect x="380.2" y="169.0" width="42.8" height="42.8" fill="#b09656"/><rect x="380.2" y="211.2" width="42.8" height="42.8" fill="#b39959"/><rect x="380.2" y="253.5" width="42.8" height="42.8" fill="#b09656"/><rect x="380.2" y="295.8" width="42.8" height="42.8" fill="#ad9353"/><rect x="380.2" y="338.0" width="42.8" height="42.8" fill="#b09656"/><rect x="380.2" y="380.2" width="42.8" height="42.8" fill="#b39959"/><rect x="380.2" y="422.5" width="42.8" height="42.8" fill="#b09656"/><rect x="380.2" y="464.8" width="42.8" height="42.8" fill="#b09656"/><rect x="422.5" y="0.0" width="42.8" height="42.8" fill="#b39959"/><rect x="422.5" y="42.2" width="42.8" height="42.8" fill="#ad9353"/><rect x="422.5" y="84.5" width="42.8" height="42.8" fill="#b09656"/><rect x="422.5" y="126.8" width="42.8" height="42.8" fill="#b09656"/><rect x="422.5" y="169.0" width="42.8" height="42.8" fill="#b09656"/><rect x="422.5" y="211.2" width="42.8" height="42.8" fill="#b09656"/><rect x="422.5" y="253.5" width="42.8" height="42.8" fill="#b39959"/><rect x="422.5" y="295.8" width="42.8" height="42.8" fill="#b39959"/><rect x="422.5" y="338.0" width="42.8" height="42.8" fill="#ad9353"/><rect x="422.5" y="380.2" width="42.8" height="42.8" fill="#ad9353"/><rect x="422.5" y="422.5" width="42.8" height="42.8" fill="#b39959"/><rect x="422.5" y="464.8" width="42.8" height="42.8" fill="#b39959"/><rect x="464.8" y="0.0" width="42.8" height="42.8" fill="#b09656"/><rect x="464.8" y="42.2" width="42.8" height="42.8" fill="#b09656"/><rect x="464.8" y="84.5" width="42.8" height="42.8" fill="#b09656"/><rect x="464.8" y="126.8" width="42.8" height="42.8" fill="#b09656"/><rect x="464.8" y="169.0" width="42.8" height="42.8" fill="#b09656"/><rect x="464.8" y="211.2" width="42.8" height="42.8" fill="#b39959"/><rect x="464.8" y="253.5" width="42.8" height="42.8" fill="#b09656"/><rect x="464.8" y="295.8" width="42.8" height="42.8" fill="#b09656"/><rect x="464.8" y="338.0" width="42.8" height="42.8" fill="#b39959"/><rect x="464.8" y="380.2" width="42.8" height="42.8" fill="#ad9353"/><rect x="464.8" y="422.5" width="42.8" height="42.8" fill="#ad9353"/><rect x="464.8" y="464.8" width="42.8" height="42.8" fill="#ad9353"/><g filter="url(#tblur)"><rect x="4.48" y="4.48" width="33.29" height="33.29" fill="url(#lat)" opacity="0.66"/><rect x="4.48" y="46.73" width="33.29" height="33.29" fill="url(#lat)" opacity="0.50"/><rect x="4.48" y="88.98" width="33.29" height="33.29" fill="url(#lat)" opacity="0.66"/><rect x="4.48" y="131.23" width="33.29" height="33.29" fill="url(#lat)" opacity="0.66"/><rect x="4.48" y="173.48" width="33.29" height="33.29" fill="url(#lat)" opacity="0.58"/><rect x="4.48" y="215.73" width="33.29" height="33.29" fill="url(#lat)" opacity="0.66"/><rect x="4.48" y="257.98" width="33.29" height="33.29" fill="url(#lat)" opacity="0.42"/><rect x="4.48" y="300.23" width="33.29" height="33.29" fill="url(#lat)" opacity="0.66"/><rect x="4.48" y="342.48" width="33.29" height="33.29" fill="url(#lat)" opacity="0.58"/><rect x="4.48" y="384.73" width="33.29" height="33.29" fill="url(#lat)" opacity="0.42"/><rect x="4.48" y="426.98" width="33.29" height="33.29" fill="url(#lat)" opacity="0.66"/><rect x="4.48" y="469.23" width="33.29" height="33.29" fill="url(#lat)" opacity="0.35"/><rect x="46.73" y="4.48" width="33.29" height="33.29" fill="url(#lat)" opacity="0.42"/><rect x="46.73" y="46.73" width="33.29" height="33.29" fill="url(#lat)" opacity="0.50"/><rect x="46.73" y="88.98" width="33.29" height="33.29" fill="url(#lat)" opacity="0.50"/><rect x="46.73" y="131.23" width="33.29" height="33.29" fill="url(#lat)" opacity="0.66"/><rect x="46.73" y="173.48" width="33.29" height="33.29" fill="url(#lat)" opacity="0.58"/><rect x="46.73" y="215.73" width="33.29" height="33.29" fill="url(#lat)" opacity="0.66"/><rect x="46.73" y="257.98" width="33.29" height="33.29" fill="url(#lat)" opacity="0.42"/><rect x="46.73" y="300.23" width="33.29" height="33.29" fill="url(#lat)" opacity="0.35"/><rect x="46.73" y="342.48" width="33.29" height="33.29" fill="url(#lat)" opacity="0.42"/><rect x="46.73" y="384.73" width="33.29" height="33.29" fill="url(#lat)" opacity="0.42"/><rect x="46.73" y="426.98" width="33.29" height="33.29" fill="url(#lat)" opacity="0.58"/><rect x="46.73" y="469.23" width="33.29" height="33.29" fill="url(#lat)" opacity="0.58"/><rect x="88.98" y="4.48" width="33.29" height="33.29" fill="url(#lat)" opacity="0.66"/><rect x="88.98" y="46.73" width="33.29" height="33.29" fill="url(#lat)" opacity="0.66"/><rect x="88.98" y="88.98" width="33.29" height="33.29" fill="url(#lat)" opacity="0.66"/><rect x="88.98" y="131.23" width="33.29" height="33.29" fill="url(#lat)" opacity="0.50"/><rect x="88.98" y="173.48" width="33.29" height="33.29" fill="url(#lat)" opacity="0.50"/><rect x="88.98" y="215.73" width="33.29" height="33.29" fill="url(#lat)" opacity="0.50"/><rect x="88.98" y="257.98" width="33.29" height="33.29" fill="url(#lat)" opacity="0.42"/><rect x="88.98" y="300.23" width="33.29" height="33.29" fill="url(#lat)" opacity="0.50"/><rect x="88.98" y="342.48" width="33.29" height="33.29" fill="url(#lat)" opacity="0.35"/><rect x="88.98" y="384.73" width="33.29" height="33.29" fill="url(#lat)" opacity="0.58"/><rect x="88.98" y="426.98" width="33.29" height="33.29" fill="url(#lat)" opacity="0.50"/><rect x="88.98" y="469.23" width="33.29" height="33.29" fill="url(#lat)" opacity="0.58"/><rect x="131.23" y="4.48" width="33.29" height="33.29" fill="url(#lat)" opacity="0.35"/><rect x="131.23" y="46.73" width="33.29" height="33.29" fill="url(#lat)" opacity="0.58"/><rect x="131.23" y="88.98" width="33.29" height="33.29" fill="url(#lat)" opacity="0.35"/><rect x="131.23" y="131.23" width="33.29" height="33.29" fill="url(#lat)" opacity="0.66"/><rect x="131.23" y="173.48" width="33.29" height="33.29" fill="url(#lat)" opacity="0.58"/><rect x="131.23" y="215.73" width="33.29" height="33.29" fill="url(#lat)" opacity="0.66"/><rect x="131.23" y="257.98" width="33.29" height="33.29" fill="url(#lat)" opacity="0.66"/><rect x="131.23" y="300.23" width="33.29" height="33.29" fill="url(#lat)" opacity="0.35"/><rect x="131.23" y="342.48" width="33.29" height="33.29" fill="url(#lat)" opacity="0.35"/><rect x="131.23" y="384.73" width="33.29" height="33.29" fill="url(#lat)" opacity="0.35"/><rect x="131.23" y="426.98" width="33.29" height="33.29" fill="url(#lat)" opacity="0.42"/><rect x="131.23" y="469.23" width="33.29" height="33.29" fill="url(#lat)" opacity="0.50"/><rect x="173.48" y="4.48" width="33.29" height="33.29" fill="url(#lat)" opacity="0.42"/><rect x="173.48" y="46.73" width="33.29" height="33.29" fill="url(#lat)" opacity="0.50"/><rect x="173.48" y="88.98" width="33.29" height="33.29" fill="url(#lat)" opacity="0.50"/><rect x="173.48" y="131.23" width="33.29" height="33.29" fill="url(#lat)" opacity="0.58"/><rect x="173.48" y="173.48" width="33.29" height="33.29" fill="url(#lat)" opacity="0.58"/><rect x="173.48" y="215.73" width="33.29" height="33.29" fill="url(#lat)" opacity="0.66"/><rect x="173.48" y="257.98" width="33.29" height="33.29" fill="url(#lat)" opacity="0.66"/><rect x="173.48" y="300.23" width="33.29" height="33.29" fill="url(#lat)" opacity="0.58"/><rect x="173.48" y="342.48" width="33.29" height="33.29" fill="url(#lat)" opacity="0.50"/><rect x="173.48" y="384.73" width="33.29" height="33.29" fill="url(#lat)" opacity="0.50"/><rect x="173.48" y="426.98" width="33.29" height="33.29" fill="url(#lat)" opacity="0.66"/><rect x="173.48" y="469.23" width="33.29" height="33.29" fill="url(#lat)" opacity="0.35"/><rect x="215.73" y="4.48" width="33.29" height="33.29" fill="url(#lat)" opacity="0.66"/><rect x="215.73" y="46.73" width="33.29" height="33.29" fill="url(#lat)" opacity="0.35"/><rect x="215.73" y="88.98" width="33.29" height="33.29" fill="url(#lat)" opacity="0.66"/><rect x="215.73" y="131.23" width="33.29" height="33.29" fill="url(#lat)" opacity="0.35"/><rect x="215.73" y="173.48" width="33.29" height="33.29" fill="url(#lat)" opacity="0.58"/><rect x="215.73" y="215.73" width="33.29" height="33.29" fill="url(#lat)" opacity="0.50"/><rect x="215.73" y="257.98" width="33.29" height="33.29" fill="url(#lat)" opacity="0.58"/><rect x="215.73" y="300.23" width="33.29" height="33.29" fill="url(#lat)" opacity="0.66"/><rect x="215.73" y="342.48" width="33.29" height="33.29" fill="url(#lat)" opacity="0.35"/><rect x="215.73" y="384.73" width="33.29" height="33.29" fill="url(#lat)" opacity="0.50"/><rect x="215.73" y="426.98" width="33.29" height="33.29" fill="url(#lat)" opacity="0.50"/><rect x="215.73" y="469.23" width="33.29" height="33.29" fill="url(#lat)" opacity="0.42"/><rect x="257.98" y="4.48" width="33.29" height="33.29" fill="url(#lat)" opacity="0.42"/><rect x="257.98" y="46.73" width="33.29" height="33.29" fill="url(#lat)" opacity="0.50"/><rect x="257.98" y="88.98" width="33.29" height="33.29" fill="url(#lat)" opacity="0.50"/><rect x="257.98" y="131.23" width="33.29" height="33.29" fill="url(#lat)" opacity="0.35"/><rect x="257.98" y="173.48" width="33.29" height="33.29" fill="url(#lat)" opacity="0.66"/><rect x="257.98" y="215.73" width="33.29" height="33.29" fill="url(#lat)" opacity="0.50"/><rect x="257.98" y="257.98" width="33.29" height="33.29" fill="url(#lat)" opacity="0.50"/><rect x="257.98" y="300.23" width="33.29" height="33.29" fill="url(#lat)" opacity="0.50"/><rect x="257.98" y="342.48" width="33.29" height="33.29" fill="url(#lat)" opacity="0.58"/><rect x="257.98" y="384.73" width="33.29" height="33.29" fill="url(#lat)" opacity="0.35"/><rect x="257.98" y="426.98" width="33.29" height="33.29" fill="url(#lat)" opacity="0.50"/><rect x="257.98" y="469.23" width="33.29" height="33.29" fill="url(#lat)" opacity="0.58"/><rect x="300.23" y="4.48" width="33.29" height="33.29" fill="url(#lat)" opacity="0.35"/><rect x="300.23" y="46.73" width="33.29" height="33.29" fill="url(#lat)" opacity="0.42"/><rect x="300.23" y="88.98" width="33.29" height="33.29" fill="url(#lat)" opacity="0.50"/><rect x="300.23" y="131.23" width="33.29" height="33.29" fill="url(#lat)" opacity="0.35"/><rect x="300.23" y="173.48" width="33.29" height="33.29" fill="url(#lat)" opacity="0.66"/><rect x="300.23" y="215.73" width="33.29" height="33.29" fill="url(#lat)" opacity="0.50"/><rect x="300.23" y="257.98" width="33.29" height="33.29" fill="url(#lat)" opacity="0.50"/><rect x="300.23" y="300.23" width="33.29" height="33.29" fill="url(#lat)" opacity="0.35"/><rect x="300.23" y="342.48" width="33.29" height="33.29" fill="url(#lat)" opacity="0.66"/><rect x="300.23" y="384.73" width="33.29" height="33.29" fill="url(#lat)" opacity="0.58"/><rect x="300.23" y="426.98" width="33.29" height="33.29" fill="url(#lat)" opacity="0.66"/><rect x="300.23" y="469.23" width="33.29" height="33.29" fill="url(#lat)" opacity="0.58"/><rect x="342.48" y="4.48" width="33.29" height="33.29" fill="url(#lat)" opacity="0.58"/><rect x="342.48" y="46.73" width="33.29" height="33.29" fill="url(#lat)" opacity="0.58"/><rect x="342.48" y="88.98" width="33.29" height="33.29" fill="url(#lat)" opacity="0.35"/><rect x="342.48" y="131.23" width="33.29" height="33.29" fill="url(#lat)" opacity="0.42"/><rect x="342.48" y="173.48" width="33.29" height="33.29" fill="url(#lat)" opacity="0.35"/><rect x="342.48" y="215.73" width="33.29" height="33.29" fill="url(#lat)" opacity="0.66"/><rect x="342.48" y="257.98" width="33.29" height="33.29" fill="url(#lat)" opacity="0.66"/><rect x="342.48" y="300.23" width="33.29" height="33.29" fill="url(#lat)" opacity="0.35"/><rect x="342.48" y="342.48" width="33.29" height="33.29" fill="url(#lat)" opacity="0.66"/><rect x="342.48" y="384.73" width="33.29" height="33.29" fill="url(#lat)" opacity="0.66"/><rect x="342.48" y="426.98" width="33.29" height="33.29" fill="url(#lat)" opacity="0.42"/><rect x="342.48" y="469.23" width="33.29" height="33.29" fill="url(#lat)" opacity="0.66"/><rect x="384.73" y="4.48" width="33.29" height="33.29" fill="url(#lat)" opacity="0.35"/><rect x="384.73" y="46.73" width="33.29" height="33.29" fill="url(#lat)" opacity="0.35"/><rect x="384.73" y="88.98" width="33.29" height="33.29" fill="url(#lat)" opacity="0.66"/><rect x="384.73" y="131.23" width="33.29" height="33.29" fill="url(#lat)" opacity="0.58"/><rect x="384.73" y="173.48" width="33.29" height="33.29" fill="url(#lat)" opacity="0.35"/><rect x="384.73" y="215.73" width="33.29" height="33.29" fill="url(#lat)" opacity="0.35"/><rect x="384.73" y="257.98" width="33.29" height="33.29" fill="url(#lat)" opacity="0.66"/><rect x="384.73" y="300.23" width="33.29" height="33.29" fill="url(#lat)" opacity="0.42"/><rect x="384.73" y="342.48" width="33.29" height="33.29" fill="url(#lat)" opacity="0.66"/><rect x="384.73" y="384.73" width="33.29" height="33.29" fill="url(#lat)" opacity="0.35"/><rect x="384.73" y="426.98" width="33.29" height="33.29" fill="url(#lat)" opacity="0.50"/><rect x="384.73" y="469.23" width="33.29" height="33.29" fill="url(#lat)" opacity="0.50"/><rect x="426.98" y="4.48" width="33.29" height="33.29" fill="url(#lat)" opacity="0.35"/><rect x="426.98" y="46.73" width="33.29" height="33.29" fill="url(#lat)" opacity="0.42"/><rect x="426.98" y="88.98" width="33.29" height="33.29" fill="url(#lat)" opacity="0.35"/><rect x="426.98" y="131.23" width="33.29" height="33.29" fill="url(#lat)" opacity="0.42"/><rect x="426.98" y="173.48" width="33.29" height="33.29" fill="url(#lat)" opacity="0.50"/><rect x="426.98" y="215.73" width="33.29" height="33.29" fill="url(#lat)" opacity="0.35"/><rect x="426.98" y="257.98" width="33.29" height="33.29" fill="url(#lat)" opacity="0.66"/><rect x="426.98" y="300.23" width="33.29" height="33.29" fill="url(#lat)" opacity="0.35"/><rect x="426.98" y="342.48" width="33.29" height="33.29" fill="url(#lat)" opacity="0.42"/><rect x="426.98" y="384.73" width="33.29" height="33.29" fill="url(#lat)" opacity="0.66"/><rect x="426.98" y="426.98" width="33.29" height="33.29" fill="url(#lat)" opacity="0.35"/><rect x="426.98" y="469.23" width="33.29" height="33.29" fill="url(#lat)" opacity="0.50"/><rect x="469.23" y="4.48" width="33.29" height="33.29" fill="url(#lat)" opacity="0.35"/><rect x="469.23" y="46.73" width="33.29" height="33.29" fill="url(#lat)" opacity="0.35"/><rect x="469.23" y="88.98" width="33.29" height="33.29" fill="url(#lat)" opacity="0.35"/><rect x="469.23" y="131.23" width="33.29" height="33.29" fill="url(#lat)" opacity="0.58"/><rect x="469.23" y="173.48" width="33.29" height="33.29" fill="url(#lat)" opacity="0.35"/><rect x="469.23" y="215.73" width="33.29" height="33.29" fill="url(#lat)" opacity="0.50"/><rect x="469.23" y="257.98" width="33.29" height="33.29" fill="url(#lat)" opacity="0.50"/><rect x="469.23" y="300.23" width="33.29" height="33.29" fill="url(#lat)" opacity="0.50"/><rect x="469.23" y="342.48" width="33.29" height="33.29" fill="url(#lat)" opacity="0.58"/><rect x="469.23" y="384.73" width="33.29" height="33.29" fill="url(#lat)" opacity="0.50"/><rect x="469.23" y="426.98" width="33.29" height="33.29" fill="url(#lat)" opacity="0.42"/><rect x="469.23" y="469.23" width="33.29" height="33.29" fill="url(#lat)" opacity="0.58"/></g><rect width="508" height="508" filter="url(#tnoise)" opacity=".3"/><g stroke="#c9b27a" stroke-width="1.4" opacity=".2"><line x1="2.0" y1="0" x2="2.0" y2="508" /><line x1="0" y1="2.0" x2="508" y2="2.0" /><line x1="44.2" y1="0" x2="44.2" y2="508" /><line x1="0" y1="44.2" x2="508" y2="44.2" /><line x1="86.5" y1="0" x2="86.5" y2="508" /><line x1="0" y1="86.5" x2="508" y2="86.5" /><line x1="128.8" y1="0" x2="128.8" y2="508" /><line x1="0" y1="128.8" x2="508" y2="128.8" /><line x1="171.0" y1="0" x2="171.0" y2="508" /><line x1="0" y1="171.0" x2="508" y2="171.0" /><line x1="213.2" y1="0" x2="213.2" y2="508" /><line x1="0" y1="213.2" x2="508" y2="213.2" /><line x1="255.5" y1="0" x2="255.5" y2="508" /><line x1="0" y1="255.5" x2="508" y2="255.5" /><line x1="297.8" y1="0" x2="297.8" y2="508" /><line x1="0" y1="297.8" x2="508" y2="297.8" /><line x1="340.0" y1="0" x2="340.0" y2="508" /><line x1="0" y1="340.0" x2="508" y2="340.0" /><line x1="382.2" y1="0" x2="382.2" y2="508" /><line x1="0" y1="382.2" x2="508" y2="382.2" /><line x1="424.5" y1="0" x2="424.5" y2="508" /><line x1="0" y1="424.5" x2="508" y2="424.5" /><line x1="466.8" y1="0" x2="466.8" y2="508" /><line x1="0" y1="466.8" x2="508" y2="466.8" /><line x1="509.0" y1="0" x2="509.0" y2="508" /><line x1="0" y1="509.0" x2="508" y2="509.0" /></g><g stroke="#36342c" stroke-width="0.9" opacity=".75"><line x1="0.0" y1="0" x2="0.0" y2="508" /><line x1="0" y1="0.0" x2="508" y2="0.0" /><line x1="42.2" y1="0" x2="42.2" y2="508" /><line x1="0" y1="42.2" x2="508" y2="42.2" /><line x1="84.5" y1="0" x2="84.5" y2="508" /><line x1="0" y1="84.5" x2="508" y2="84.5" /><line x1="126.8" y1="0" x2="126.8" y2="508" /><line x1="0" y1="126.8" x2="508" y2="126.8" /><line x1="169.0" y1="0" x2="169.0" y2="508" /><line x1="0" y1="169.0" x2="508" y2="169.0" /><line x1="211.2" y1="0" x2="211.2" y2="508" /><line x1="0" y1="211.2" x2="508" y2="211.2" /><line x1="253.5" y1="0" x2="253.5" y2="508" /><line x1="0" y1="253.5" x2="508" y2="253.5" /><line x1="295.8" y1="0" x2="295.8" y2="508" /><line x1="0" y1="295.8" x2="508" y2="295.8" /><line x1="338.0" y1="0" x2="338.0" y2="508" /><line x1="0" y1="338.0" x2="508" y2="338.0" /><line x1="380.2" y1="0" x2="380.2" y2="508" /><line x1="0" y1="380.2" x2="508" y2="380.2" /><line x1="422.5" y1="0" x2="422.5" y2="508" /><line x1="0" y1="422.5" x2="508" y2="422.5" /><line x1="464.8" y1="0" x2="464.8" y2="508" /><line x1="0" y1="464.8" x2="508" y2="464.8" /><line x1="507.0" y1="0" x2="507.0" y2="508" /><line x1="0" y1="507.0" x2="508" y2="507.0" /></g></svg></div>
<div class="a" style="left:643px;top:134px;width:56px;height:26px;background:linear-gradient(#dcd9d2,#c9c5bc);border:1px solid #222;border-radius:6px"></div>
<div class="t" style="left:652px;top:141px;font-size:12.5px;font-weight:bold;color:#111;text-shadow:none">View</div>
<svg class="a" style="left:680px;top:144px" width="10" height="6"><path d="M0,0 L8,0 L4,4 Z" fill="#111"/></svg>
<div class="t" style="left:1006px;top:141px;font-size:11.7px;color:#ece8dc">T_ChangingRoomFloor_A</div>

<div class="a zoombar"></div>
<div class="t" style="left:980px;top:650px;font-size:12px">Zoom:</div>
<div class="a" style="left:1022px;top:654px;width:87px;height:2px;background:#f0f0f0"></div>
<div class="a" style="left:1027px;top:648px;width:8px;height:14px;background:linear-gradient(#e8e8e8,#a8a8a8);border-radius:2px"></div>
<div class="t" style="left:1117px;top:650px;font-size:12px">Fit</div>
<div class="a" style="left:1134px;top:648px;width:14px;height:14px;background:linear-gradient(#e0e0e0,#a0a0a0);border-radius:2px"></div>
<svg class="a" style="left:1136px;top:652px" width="10" height="6"><path d="M0,0 L10,0 L5,5 Z" fill="#111"/></svg>

<!-- details panel -->
<div class="a dtab"></div>
<svg class="a" style="left:1164px;top:62px" width="22" height="22">
  <line x1="13" y1="14" x2="18" y2="17.5" stroke="#4a6ee0" stroke-width="2.6" stroke-linecap="round"/>
  <circle cx="8.8" cy="9.5" r="6.2" fill="#2c2c34" stroke="#7f88d8" stroke-width="1.6"/>
  <rect x="7.8" y="8" width="2.2" height="5.5" fill="#f0f0e8"/><rect x="7.8" y="5" width="2.2" height="2" fill="#f0f0e8"/><rect x="6.8" y="12.5" width="4.2" height="1.2" fill="#f0f0e8"/>
</svg>
<div class="t" style="left:1189px;top:67px;font-size:12px">Details</div>
<svg class="a" style="left:1293px;top:68px" width="8" height="8"><path d="M1,1 L7,7 M7,1 L1,7" stroke="#555" stroke-width="1.2"/></svg>
<div class="a panel"></div>
<div class="a box" style="left:1160px;top:88px;width:389px;height:114px"></div>
<div class="t" style="left:1166px;top:95px">Imported: 2048x2048</div>
<div class="t" style="left:1166px;top:117px">Displayed: 2048x2048</div>
<div class="t" style="left:1166px;top:139px">Max In-Game: 2048x2048</div>
<div class="t" style="left:1166px;top:161px">Resource Size: 2752 Kb</div>
<div class="t" style="left:1166px;top:183px">Has Alpha Channel: False</div>
<div class="t" style="left:1358px;top:95px">Method: Streamed</div>
<div class="t" style="left:1358px;top:117px">Format: DXT1</div>
<div class="t" style="left:1358px;top:139px">Combined LOD Bias: 0</div>
<div class="t" style="left:1358px;top:161px">Number of Mips: 12</div>
<div class="a box" style="left:1160px;top:206px;width:389px;height:457px;background:#383838"></div>
<div class="a" style="left:1166px;top:217px;width:306px;height:18px;background:#c6c6c6;border-radius:2px"></div>
<div class="t" style="left:1171px;top:220px;color:#888;text-shadow:none">Search Details</div>
<svg class="a" style="left:1454px;top:218px" width="16" height="16"><circle cx="9" cy="7" r="5" fill="none" stroke="#111" stroke-width="2"/><line x1="5" y1="11" x2="1" y2="15" stroke="#111" stroke-width="2.5"/></svg>
<div class="a" style="left:1480px;top:215px;width:27px;height:22px;background:linear-gradient(#dcdcdc,#b8b8b8);border-radius:2px"></div>
<svg class="a" style="left:1487px;top:218px" width="16" height="16"><path d="M1,3.5H3M4,3.5H9M10,3.5H14M1,6.5H3M4,6.5H9M10,6.5H14M1,9.5H3M4,9.5H9M10,9.5H14M1,12.5H3M4,12.5H9M10,12.5H14M1,15H3M4,15H9M10,15H14" stroke="#5a5a5a" stroke-width="1.6"/></svg>
<svg class="a" style="left:1510px;top:219px" width="32" height="14"><ellipse cx="10" cy="7" rx="8" ry="4.8" fill="#d4d6dc"/><circle cx="10" cy="7" r="3" fill="#4a5aa0"/><path d="M22,5 L30,5 L26,9 Z" fill="#ccc"/></svg>

<!-- property table -->
<div class="a hdr" style="left:1164px;top:239px;width:367px;height:28px"></div>
<div class="a row" style="left:1164px;top:267px;width:367px;height:76px"></div>
<div class="a" style="left:1164px;top:343px;width:367px;height:14px;background:#454545"></div>
<div class="a hdr" style="left:1164px;top:357px;width:367px;height:29px"></div>
<div class="a row" style="left:1164px;top:386px;width:367px;height:146px"></div>
<div class="a" style="left:1164px;top:532px;width:380px;height:25px;background:#434343"></div>
<div class="a" style="left:1164px;top:558px;width:367px;height:2px;background:#2c2c2c"></div>
<div class="a row" style="left:1164px;top:560px;width:367px;height:99px"></div>
<div class="a" style="left:1291px;top:239px;width:1px;height:104px;background:#262626"></div>
<div class="a" style="left:1291px;top:357px;width:1px;height:200px;background:#262626"></div>
<div class="a" style="left:1291px;top:566px;width:1px;height:93px;background:#262626"></div>
<div class="a" style="left:1536px;top:241px;width:1px;height:416px;background:#535353"></div>
<div class="a" style="left:1531px;top:241px;width:10px;height:167px;background:#eeeeee;border-radius:1px"></div>

<svg class="a" style="left:1166px;top:249px" width="10" height="10"><path d="M8,0 L8,8 L0,8 Z" fill="#cfcfcf"/></svg>
<div class="t" style="left:1178px;top:247px;font-size:12px;font-weight:bold;color:#e8e8e8">Compression</div>
<div class="t lbl" style="left:1180px;top:274px">Compress Without Alp</div>
<div class="a cb" style="left:1296px;top:272px"></div>
<div class="t lbl" style="left:1180px;top:298px">Defer Compression</div>
<div class="a cb" style="left:1296px;top:296px"></div>
<div class="t lbl" style="left:1180px;top:322px">Compression Settings</div>
<div class="a dd" style="left:1296px;top:319px;width:187px"></div>
<div class="t" style="left:1301px;top:323px;color:#111;text-shadow:none;font-size:11px">Default (DXT1/5, BC1/3 on DX11)</div>
<svg class="a" style="left:1467px;top:325px" width="10" height="6"><path d="M0,0 L9,0 L4.5,5 Z" fill="#111"/></svg>
<svg class="a" style="left:1340px;top:345px" width="12" height="10"><path d="M1,1 L11,1 M1,4 L11,4 L6,9 Z" stroke="#eee" fill="#eee" stroke-width="1.2"/></svg>
<svg class="a" style="left:1166px;top:367px" width="10" height="10"><path d="M8,0 L8,8 L0,8 Z" fill="#cfcfcf"/></svg>
<div class="t" style="left:1178px;top:365px;font-size:12px;font-weight:bold;color:#e8e8e8">Texture</div>
<div class="t lbl" style="left:1180px;top:394px">Power Of Two Mode</div>
<div class="a dd" style="left:1296px;top:390px;width:107px"></div>
<div class="t" style="left:1301px;top:394px;color:#111;text-shadow:none;font-size:11px">None</div>
<svg class="a" style="left:1386px;top:396px" width="10" height="6"><path d="M0,0 L9,0 L4.5,5 Z" fill="#111"/></svg>
<svg class="a" style="left:1168px;top:419px" width="9" height="9"><path d="M7,0 L7,7 L0,7 Z" fill="#cfcfcf"/></svg>
<div class="t lbl" style="left:1180px;top:419px">Padding Color</div>
<div class="a" style="left:1295px;top:418px;width:215px;height:12px;background:#000"></div>
<div class="t lbl" style="left:1190px;top:443px">R</div>
<div class="a fld" style="left:1295px;top:440px;width:55px"></div><div class="t" style="left:1299px;top:443px;color:#111;text-shadow:none;font-size:11px">0</div>
<svg class="a" style="left:1337px;top:443px" width="10" height="10"><path d="M0.5,1 L7,1 L7,7.5 Z M2,3.5 L2,9 L7.5,9 Z" fill="#111"/></svg>
<div class="t lbl" style="left:1190px;top:467px">G</div>
<div class="a fld" style="left:1295px;top:464px;width:55px"></div><div class="t" style="left:1299px;top:467px;color:#111;text-shadow:none;font-size:11px">0</div>
<svg class="a" style="left:1337px;top:467px" width="10" height="10"><path d="M0.5,1 L7,1 L7,7.5 Z M2,3.5 L2,9 L7.5,9 Z" fill="#111"/></svg>
<div class="t lbl" style="left:1190px;top:491px">B</div>
<div class="a fld" style="left:1295px;top:488px;width:55px"></div><div class="t" style="left:1299px;top:491px;color:#111;text-shadow:none;font-size:11px">0</div>
<svg class="a" style="left:1337px;top:491px" width="10" height="10"><path d="M0.5,1 L7,1 L7,7.5 Z M2,3.5 L2,9 L7.5,9 Z" fill="#111"/></svg>
<div class="t lbl" style="left:1190px;top:515px">A</div>
<div class="a fld" style="left:1295px;top:512px;width:55px"></div><div class="t" style="left:1299px;top:515px;color:#111;text-shadow:none;font-size:11px">255</div>
<svg class="a" style="left:1337px;top:515px" width="10" height="10"><path d="M0.5,1 L7,1 L7,7.5 Z M2,3.5 L2,9 L7.5,9 Z" fill="#111"/></svg>
<div class="t lbl" style="left:1180px;top:539px">sRGB</div>
<div class="a cb" style="left:1296px;top:537px"></div>
<svg class="a" style="left:1318px;top:539px" width="10" height="9"><path d="M8,8 L8,3 L2,3 M4,1 L2,3 L4,5" fill="none" stroke="#e8e020" stroke-width="1.3"/></svg>
<div class="t lbl" style="left:1180px;top:575px">X-axis Tiling Method</div>
<div class="a dd" style="left:1296px;top:571px;width:103px;height:18px"></div>
<div class="t" style="left:1301px;top:575px;color:#111;text-shadow:none;font-size:11px">Wrap</div>
<svg class="a" style="left:1383px;top:577px" width="10" height="6"><path d="M0,0 L9,0 L4.5,5 Z" fill="#111"/></svg>
<div class="t lbl" style="left:1180px;top:601px">Y-axis Tiling Method</div>
<div class="a dd" style="left:1296px;top:597px;width:103px;height:18px"></div>
<div class="t" style="left:1301px;top:601px;color:#111;text-shadow:none;font-size:11px">Wrap</div>
<svg class="a" style="left:1383px;top:603px" width="10" height="6"><path d="M0,0 L9,0 L4.5,5 Z" fill="#111"/></svg>
<div class="t lbl" style="left:1180px;top:626px">Dither Mip Map Alpha</div>
<div class="a cb" style="left:1296px;top:624px"></div>
<div class="a" style="left:1160px;top:645px;width:380px;height:13px;overflow:hidden">
 <svg class="a" style="left:8px;top:6px" width="8" height="8"><path d="M1,0.5 L6,3.5 L1,6.5 Z" fill="none" stroke="#cfcfcf" stroke-width="1"/></svg>
 <div class="t lbl" style="left:20px;top:4px">Alpha Coverage Thres</div>
 <div class="a fld" style="left:135px;top:3px;width:50px"></div><div class="t" style="left:139px;top:6px;color:#111;text-shadow:none;font-size:11px">X 0.0</div>
 <div class="a fld" style="left:189px;top:3px;width:51px"></div><div class="t" style="left:193px;top:6px;color:#111;text-shadow:none;font-size:11px">Y 0.0</div>
 <div class="a fld" style="left:244px;top:3px;width:50px"></div><div class="t" style="left:248px;top:6px;color:#111;text-shadow:none;font-size:11px">Z 0.0</div>
 <div class="a fld" style="left:298px;top:3px;width:51px"></div><div class="t" style="left:302px;top:6px;color:#111;text-shadow:none;font-size:11px">W 1.0</div>
 <svg class="a" style="left:172px;top:6px" width="10" height="10"><path d="M0.5,1 L7,1 L7,7.5 Z" fill="#111"/></svg>
 <svg class="a" style="left:227px;top:6px" width="10" height="10"><path d="M0.5,1 L7,1 L7,7.5 Z" fill="#111"/></svg>
 <svg class="a" style="left:281px;top:6px" width="10" height="10"><path d="M0.5,1 L7,1 L7,7.5 Z" fill="#111"/></svg>
 <svg class="a" style="left:336px;top:6px" width="10" height="10"><path d="M0.5,1 L7,1 L7,7.5 Z" fill="#111"/></svg>
 <svg class="a" style="left:354px;top:6px" width="10" height="9"><path d="M8,8 L8,3 L2,3 M4,1 L2,3 L4,5" fill="none" stroke="#e8e020" stroke-width="1.3"/></svg>
</div>
<div class="a" style="left:1162px;top:659px;width:385px;height:2px;background:#505050"></div>
<div class="a" style="left:1157px;top:661px;width:395px;height:5px;background:#343434"></div>
<svg class="a" style="left:1553px;top:666px" width="5" height="8"><rect x="2" y="2" width="3" height="6" fill="#e0b020"/></svg>
</body></html>
